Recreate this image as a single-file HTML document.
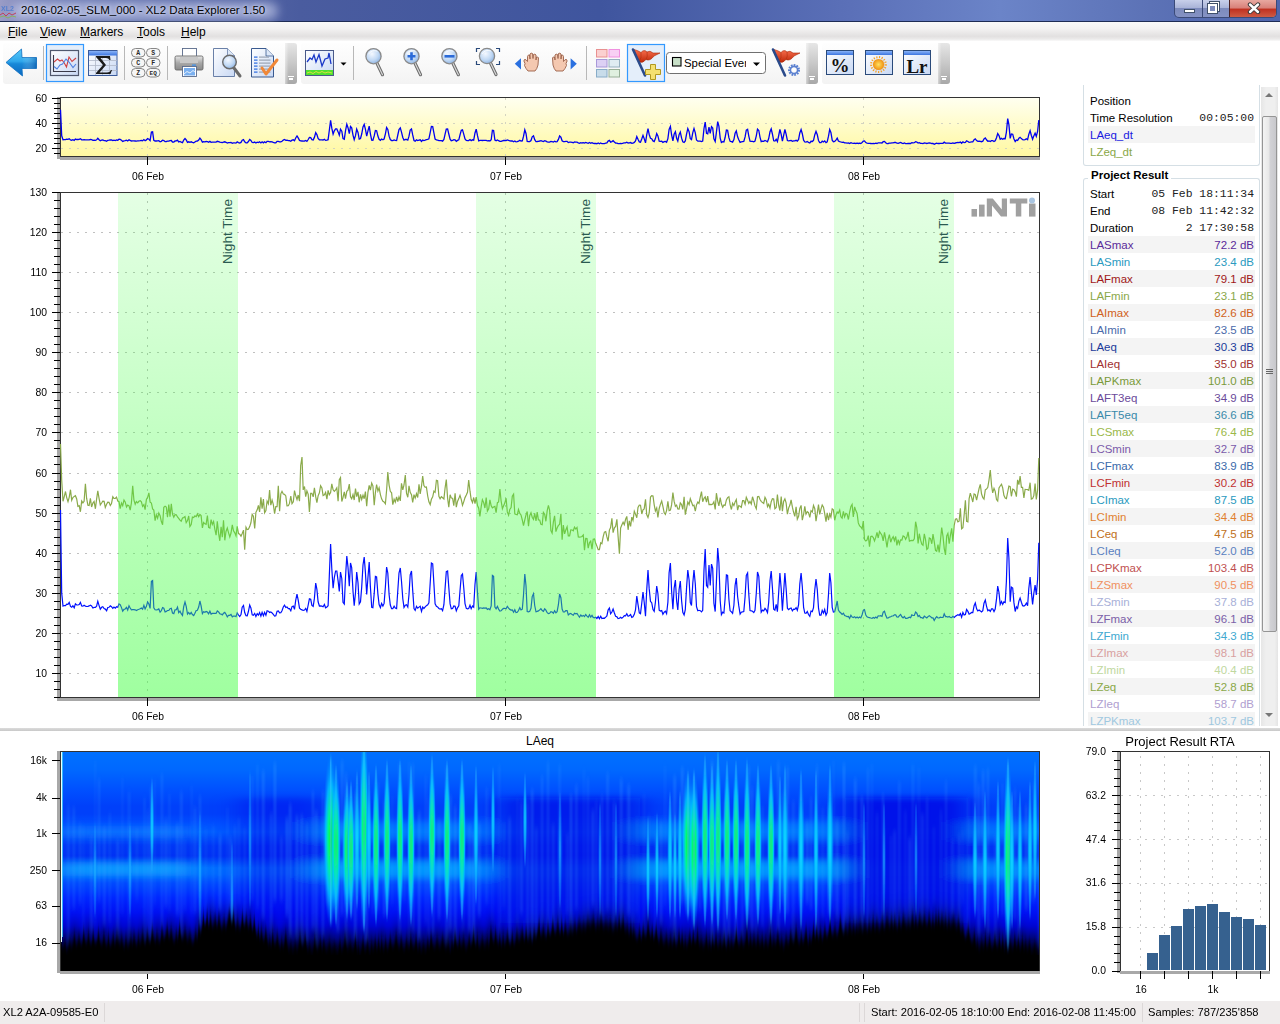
<!DOCTYPE html><html><head><meta charset="utf-8"><style>
*{margin:0;padding:0;box-sizing:border-box}
html,body{width:1280px;height:1024px;overflow:hidden;background:#fff;font-family:"Liberation Sans",sans-serif;font-size:12px;color:#000}
.a{position:absolute}
#title{left:0;top:0;width:1280px;height:22px;background:linear-gradient(90deg,#9a9cc6 0px,#6f7db5 40px,#4a5c9f 300px,#3f559e 600px,#5b70b8 850px,#6b84c8 1000px,#5c72b6 1150px,#4f66ad 1280px);border-bottom:1px solid #1e2c55}
#menu{left:0;top:22px;width:1280px;height:19px;background:linear-gradient(#f9f9f9 0,#f3f2f2 35%,#e2e0e0 75%,#ebeaea 90%,#fafafa 100%)}
#menu span{position:absolute;top:3px;font-size:12px}
#menu u{text-decoration:underline}
#tb{left:0;top:41px;width:1280px;height:45px;background:#fff}
.yl{position:absolute;font-size:11.5px;text-align:right;width:40px;line-height:12px;transform:scaleX(0.9);transform-origin:100% 50%}
.xl{position:absolute;font-size:11.5px;text-align:center;width:60px;line-height:12px;transform:scaleX(0.9);transform-origin:50% 50%}
.rp{position:absolute;left:1088px;width:167px;height:17px;line-height:17px;font-size:11.5px;padding-top:1px;padding-left:2px}
.rp b{font-weight:normal;position:absolute;right:1px;top:1px}
.rp.h{background:#f4f4f4}
.rp.h b{right:1px}
.mono{font-family:"Liberation Mono",monospace;font-size:11.4px;color:#222}
</style></head><body>
<div class="a" id="title"></div>
<div class="a" style="left:12px;top:2px;width:266px;height:18px;border-radius:9px;background:rgba(205,210,238,0.6);filter:blur(5px)"></div>
<div class="a" style="left:21px;top:4px;font-size:11.5px;color:#000;text-shadow:0 0 6px #c8d0f0,0 0 3px #dfe6ff">2016-02-05_SLM_000 - XL2 Data Explorer 1.50</div>
<svg class="a" style="left:0;top:3px" width="17" height="16"><text x="1" y="7.5" font-size="7" font-family="Liberation Sans" font-weight="bold" fill="#4a7ad0" opacity="0.85">XL2</text><polyline points="0,12 3,10 6,13 9,10 12,12 16,10" fill="none" stroke="#c04060" stroke-width="1"/><polyline points="0,14 4,13 8,15 12,13 16,14" fill="none" stroke="#8ab060" stroke-width="1"/></svg>
<div class="a" style="left:1174px;top:0;width:103px;height:18px;border:1px solid #3b4a78;border-top:none;border-radius:0 0 5px 5px;overflow:hidden;background:linear-gradient(#c8d0ea,#aab4d8 45%,#7d8bbc 50%,#8592c4 100%)">
<div class="a" style="left:27px;top:0;width:1px;height:18px;background:#3b4a78"></div>
<div class="a" style="left:54px;top:0;width:48px;height:18px;border-left:1px solid #4a2020;background:linear-gradient(#e8a8a0,#d88078 45%,#c03020 50%,#d06048 100%)"></div>
<div class="a" style="left:9px;top:9px;width:11px;height:4px;background:#fff;border:1px solid #40506a"></div>
<div class="a" style="left:35px;top:2px;width:9px;height:9px;border:2px solid #fff;outline:1px solid #40506a;"></div>
<div class="a" style="left:33px;top:4px;width:9px;height:9px;border:2px solid #fff;outline:1px solid #40506a;background:#7d8bbc"></div>
<svg class="a" style="left:72px;top:2px" width="14" height="12"><path d="M3,2.5 L11,10 M11,2.5 L3,10" stroke="#3a3a3a" stroke-width="4.4" stroke-linecap="round"/><path d="M3,2.5 L11,10 M11,2.5 L3,10" stroke="#fff" stroke-width="2.4" stroke-linecap="round"/></svg>
</div>
<div class="a" id="menu">
<span style="left:8px"><u>F</u>ile</span>
<span style="left:40px"><u>V</u>iew</span>
<span style="left:80px"><u>M</u>arkers</span>
<span style="left:137px"><u>T</u>ools</span>
<span style="left:181px"><u>H</u>elp</span>
</div>
<div class="a" id="tb"></div>
<div class="a" style="left:3px;top:43px;width:294px;height:41px;border-radius:3px;background:linear-gradient(#fefefe,#f8f8f8 60%,#f3f3f3)"></div>
<div class="a" style="left:301px;top:43px;width:517px;height:41px;border-radius:3px;background:linear-gradient(#fefefe,#f8f8f8 60%,#f3f3f3)"></div>
<div class="a" style="left:822px;top:43px;width:128px;height:41px;border-radius:3px;background:linear-gradient(#fefefe,#f8f8f8 60%,#f3f3f3)"></div>
<div class="a" style="left:285px;top:43px;width:12px;height:41px;border-radius:0 3px 3px 0;background:linear-gradient(90deg,rgba(255,255,255,0.5),rgba(255,255,255,0) 30%),linear-gradient(#e6e6e6,#c8c8c8 50%,#a8a8a8)"><div class="a" style="left:3px;top:33px;width:6px;height:1px;background:#fff"></div><div class="a" style="left:4px;top:35px;width:4px;height:2px;background:#fff"></div></div>
<div class="a" style="left:806px;top:43px;width:12px;height:41px;border-radius:0 3px 3px 0;background:linear-gradient(90deg,rgba(255,255,255,0.5),rgba(255,255,255,0) 30%),linear-gradient(#e6e6e6,#c8c8c8 50%,#a8a8a8)"><div class="a" style="left:3px;top:33px;width:6px;height:1px;background:#fff"></div><div class="a" style="left:4px;top:35px;width:4px;height:2px;background:#fff"></div></div>
<div class="a" style="left:938px;top:43px;width:12px;height:41px;border-radius:0 3px 3px 0;background:linear-gradient(90deg,rgba(255,255,255,0.5),rgba(255,255,255,0) 30%),linear-gradient(#e6e6e6,#c8c8c8 50%,#a8a8a8)"><div class="a" style="left:3px;top:33px;width:6px;height:1px;background:#fff"></div><div class="a" style="left:4px;top:35px;width:4px;height:2px;background:#fff"></div></div>
<svg class="a" style="left:0;top:41px" width="960" height="45" viewBox="0 41 960 45">
<defs>
<linearGradient id="arr" x1="0" y1="0" x2="0" y2="1"><stop offset="0" stop-color="#58c8f8"/><stop offset="0.45" stop-color="#30a8ec"/><stop offset="0.55" stop-color="#1888d8"/><stop offset="1" stop-color="#0a68c0"/></linearGradient>
<linearGradient id="arr2" x1="0" y1="0" x2="1" y2="0"><stop offset="0" stop-color="#fff" stop-opacity="0"/><stop offset="1" stop-color="#004a9a" stop-opacity="0.5"/></linearGradient>
<radialGradient id="mg" cx="0.4" cy="0.35" r="0.7"><stop offset="0" stop-color="#f4f8ff"/><stop offset="0.6" stop-color="#c0d8f4"/><stop offset="1" stop-color="#8ab0e0"/></radialGradient>
<linearGradient id="ic" x1="0" y1="0" x2="1" y2="1"><stop offset="0" stop-color="#ffffff"/><stop offset="1" stop-color="#c8d8f4"/></linearGradient>
<linearGradient id="hdr" x1="0" y1="0" x2="0" y2="1"><stop offset="0" stop-color="#8ab4f8"/><stop offset="1" stop-color="#3a74e0"/></linearGradient>
<linearGradient id="pr" x1="0" y1="0" x2="0" y2="1"><stop offset="0" stop-color="#e8e8e8"/><stop offset="0.5" stop-color="#a8a8a8"/><stop offset="1" stop-color="#8a8a8a"/></linearGradient>
<linearGradient id="flag" x1="0" y1="0" x2="0" y2="1"><stop offset="0" stop-color="#f87050"/><stop offset="1" stop-color="#c02808"/></linearGradient>
<radialGradient id="sun"><stop offset="0" stop-color="#ffe060"/><stop offset="1" stop-color="#f09010"/></radialGradient>
</defs>
<path d="M6,62.5 L21.5,49 L22,57.5 L36.5,57.5 L36.5,68.5 L22,68.5 L22.5,76 Z" fill="url(#arr)" stroke="#1070c0" stroke-width="0.8" stroke-linejoin="round"/>
<path d="M22,57.5 L36.5,57.5 L36.5,68.5 L22,68.5 Z" fill="url(#arr2)"/>
<line x1="43.5" y1="46" x2="43.5" y2="80" stroke="#b8b8b8"/>
<line x1="124.5" y1="46" x2="124.5" y2="80" stroke="#b8b8b8"/>
<line x1="167.5" y1="46" x2="167.5" y2="80" stroke="#b8b8b8"/>
<line x1="353.5" y1="46" x2="353.5" y2="80" stroke="#b8b8b8"/>
<line x1="586.5" y1="46" x2="586.5" y2="80" stroke="#b8b8b8"/>
<rect x="46.5" y="44.5" width="37" height="37" fill="#e4eefa" stroke="#3399ff" stroke-width="1.2"/>
<rect x="627.5" y="44.5" width="37" height="37" fill="#e4eefa" stroke="#3399ff" stroke-width="1.2"/>
<rect x="50.5" y="50.5" width="28" height="25" fill="url(#ic)" stroke="#50586e" stroke-width="1.2"/>
<polyline points="53.5,55 53.5,71.5 76,71.5" fill="none" stroke="#3a3a4a" stroke-width="1.1"/>
<polyline points="54,62 57.5,59 60,61 62,60 64,62.5 66.5,67 69,57 72,61.5 76,58" fill="none" stroke="#d04040" stroke-width="1.1"/>
<polyline points="54,66.5 57,69 60,65 62.5,64 66,59 69,62 73,67.5 76,64" fill="none" stroke="#5080e0" stroke-width="1.1"/>
<rect x="88.5" y="50.5" width="28.5" height="25" fill="url(#ic)" stroke="#3a5a9a" stroke-width="1"/>
<rect x="89" y="51" width="28" height="4.5" fill="url(#hdr)"/>
<line x1="89" y1="60.5" x2="117" y2="60.5" stroke="#b0b8c8" stroke-width="0.8"/>
<line x1="89" y1="65.5" x2="117" y2="65.5" stroke="#b0b8c8" stroke-width="0.8"/>
<line x1="89" y1="70.5" x2="117" y2="70.5" stroke="#b0b8c8" stroke-width="0.8"/>
<line x1="95.5" y1="55.5" x2="95.5" y2="75" stroke="#b0b8c8" stroke-width="0.8"/>
<line x1="102.5" y1="55.5" x2="102.5" y2="75" stroke="#b0b8c8" stroke-width="0.8"/>
<line x1="109.5" y1="55.5" x2="109.5" y2="75" stroke="#b0b8c8" stroke-width="0.8"/>
<path d="M96,56 L110,56 L110.5,60 L109.5,60 Q108.5,58 106,58 L100.5,58 L106,65 L99.5,72.5 L107,72.5 Q110,72.5 111,70 L112,70 L110.5,74 L96,74 L96,73 L103,65 L96,57 Z" fill="#1a1a1a"/>
<rect x="131.5" y="48.5" width="13.5" height="8.5" rx="4" fill="#f6f6f6" stroke="#7a7a7a" stroke-width="0.9"/>
<text x="138.2" y="55.3" font-size="6.5" font-family="Liberation Mono" font-weight="bold" text-anchor="middle" fill="#2a2a2a">A</text>
<rect x="146.5" y="48.5" width="13.5" height="8.5" rx="4" fill="#f6f6f6" stroke="#7a7a7a" stroke-width="0.9"/>
<text x="153.2" y="55.3" font-size="6.5" font-family="Liberation Mono" font-weight="bold" text-anchor="middle" fill="#2a2a2a">S</text>
<rect x="131.5" y="58.5" width="13.5" height="8.5" rx="4" fill="#f6f6f6" stroke="#7a7a7a" stroke-width="0.9"/>
<text x="138.2" y="65.3" font-size="6.5" font-family="Liberation Mono" font-weight="bold" text-anchor="middle" fill="#2a2a2a">C</text>
<rect x="146.5" y="58.5" width="13.5" height="8.5" rx="4" fill="#f6f6f6" stroke="#7a7a7a" stroke-width="0.9"/>
<text x="153.2" y="65.3" font-size="6.5" font-family="Liberation Mono" font-weight="bold" text-anchor="middle" fill="#2a2a2a">F</text>
<rect x="131.5" y="68.5" width="13.5" height="8.5" rx="4" fill="#f6f6f6" stroke="#7a7a7a" stroke-width="0.9"/>
<text x="138.2" y="75.3" font-size="6.5" font-family="Liberation Mono" font-weight="bold" text-anchor="middle" fill="#2a2a2a">Z</text>
<rect x="146.5" y="68.5" width="13.5" height="8.5" rx="4" fill="#f6f6f6" stroke="#7a7a7a" stroke-width="0.9"/>
<text x="153.2" y="75.3" font-size="6" font-family="Liberation Mono" font-weight="bold" text-anchor="middle" fill="#2a2a2a">EQ</text>
<rect x="182.5" y="48.5" width="14" height="9" fill="#fff" stroke="#5a6a8a" stroke-width="0.9"/>
<rect x="175" y="56" width="28" height="14" rx="1.5" fill="url(#pr)" stroke="#6a6a6a" stroke-width="0.9"/>
<rect x="180" y="57" width="18" height="6" fill="#c8c8c8"/>
<rect x="192" y="64.5" width="4" height="1.2" fill="#3a90f0"/>
<rect x="182.5" y="66.5" width="14" height="10" fill="#fff" stroke="#5a6a8a" stroke-width="0.9"/>
<rect x="184" y="68" width="11" height="7.5" fill="#7ab0f0"/>
<polyline points="184,74 187,71.5 190,73 193,70.5 195,72" fill="none" stroke="#fff" stroke-width="0.8"/>
<path d="M213.5,48.5 L227.5,48.5 L234.5,55.5 L234.5,76.5 L213.5,76.5 Z" fill="url(#ic)" stroke="#6a80a8" stroke-width="1"/>
<path d="M227.5,48.5 L227.5,55.5 L234.5,55.5" fill="#dde8f8" stroke="#6a80a8" stroke-width="0.8"/>
<line x1="234" y1="68" x2="240" y2="76" stroke="#6a6a6a" stroke-width="3" stroke-linecap="round"/>
<circle cx="229.5" cy="62" r="6.8" fill="url(#mg)" stroke="#6a6a6a" stroke-width="1.4"/>
<path d="M251.5,48.5 L266,48.5 L273.5,56 L273.5,77 L251.5,77 Z" fill="url(#ic)" stroke="#3a5a90" stroke-width="1"/>
<path d="M266,48.5 L266,56 L273.5,56" fill="#dde8f8" stroke="#3a5a90" stroke-width="0.8"/>
<rect x="254" y="56.5" width="3.5" height="1.2" fill="#2a6ae0"/>
<rect x="259" y="56.5" width="10" height="1.2" fill="#9aa4b4"/>
<rect x="254" y="59.5" width="3.5" height="1.2" fill="#2a6ae0"/>
<rect x="259" y="59.5" width="11.5" height="1.2" fill="#9aa4b4"/>
<rect x="254" y="62.5" width="3.5" height="1.2" fill="#2a6ae0"/>
<rect x="259" y="62.5" width="11.5" height="1.2" fill="#9aa4b4"/>
<rect x="254" y="65.5" width="3.5" height="1.2" fill="#2a6ae0"/>
<rect x="259" y="65.5" width="11.5" height="1.2" fill="#9aa4b4"/>
<rect x="254" y="68.5" width="3.5" height="1.2" fill="#2a6ae0"/>
<rect x="259" y="68.5" width="11.5" height="1.2" fill="#9aa4b4"/>
<rect x="254" y="71.5" width="3.5" height="1.2" fill="#2a6ae0"/>
<rect x="259" y="71.5" width="11.5" height="1.2" fill="#9aa4b4"/>
<path d="M262,68 L266,74 L277,60" fill="none" stroke="#f08838" stroke-width="3" stroke-linecap="round" stroke-linejoin="round"/>
<rect x="305.5" y="50.5" width="28" height="25" fill="url(#ic)" stroke="#4a5a8a" stroke-width="1"/>
<rect x="306" y="70" width="27" height="5" fill="#50e030"/>
<polyline points="307,73 310,72 313,73.5 316,71.5 319,73 322,71.5 325,73 328,72 332,73" fill="none" stroke="#e8e040" stroke-width="0.9"/>
<polyline points="307,62 310,58 312,59.5 314,55 316,62 319,54.5 322,66 325,59 328,58 329,53 331,64" fill="none" stroke="#1a38c8" stroke-width="1.3"/>
<path d="M340.5,62.5 L346.5,62.5 L343.5,65.5 Z" fill="#000"/>
<g>
<line x1="377.0" y1="63.2" x2="382.5" y2="74.7" stroke="#6a6a6a" stroke-width="3.2" stroke-linecap="round"/>
<line x1="377.0" y1="63.2" x2="382.5" y2="74.7" stroke="#d8d8d8" stroke-width="1.2" stroke-linecap="round"/>
<circle cx="373.5" cy="56.2" r="7.6" fill="url(#mg)" stroke="#8a8a8a" stroke-width="1.3"/>
<path d="M368.5,54.2 q3,-5 9,-3" stroke="#fff" stroke-width="1" fill="none" opacity="0.8"/>
</g>
<g>
<line x1="415.0" y1="63.2" x2="420.5" y2="74.7" stroke="#6a6a6a" stroke-width="3.2" stroke-linecap="round"/>
<line x1="415.0" y1="63.2" x2="420.5" y2="74.7" stroke="#d8d8d8" stroke-width="1.2" stroke-linecap="round"/>
<circle cx="411.5" cy="56.2" r="7.6" fill="url(#mg)" stroke="#8a8a8a" stroke-width="1.3"/>
<path d="M406.5,54.2 q3,-5 9,-3" stroke="#fff" stroke-width="1" fill="none" opacity="0.8"/>
<path d="M407.5,56.2 h8 M411.5,52.2 v8" stroke="#2a6ad8" stroke-width="2.6"/></g>
<g>
<line x1="452.9" y1="63.2" x2="458.4" y2="74.7" stroke="#6a6a6a" stroke-width="3.2" stroke-linecap="round"/>
<line x1="452.9" y1="63.2" x2="458.4" y2="74.7" stroke="#d8d8d8" stroke-width="1.2" stroke-linecap="round"/>
<circle cx="449.4" cy="56.2" r="7.6" fill="url(#mg)" stroke="#8a8a8a" stroke-width="1.3"/>
<path d="M444.4,54.2 q3,-5 9,-3" stroke="#fff" stroke-width="1" fill="none" opacity="0.8"/>
<rect x="444.5" y="55" width="10" height="2.6" fill="#2a6ad8"/></g>
<g>
<line x1="490.5" y1="63" x2="496" y2="74.5" stroke="#6a6a6a" stroke-width="3.2" stroke-linecap="round"/>
<line x1="490.5" y1="63" x2="496" y2="74.5" stroke="#d8d8d8" stroke-width="1.2" stroke-linecap="round"/>
<circle cx="487" cy="56" r="7.6" fill="url(#mg)" stroke="#8a8a8a" stroke-width="1.3"/>
<path d="M482,54 q3,-5 9,-3" stroke="#fff" stroke-width="1" fill="none" opacity="0.8"/>
<path d="M476.5,52 v-3.5 h3.5 M496,48.5 h3.5 v3.5 M499.5,61 v3.5 h-3.5 M480,64.5 h-3.5 v-3.5" fill="none" stroke="#2a4a7a" stroke-width="1.2"/></g>
<path d="M514.8,63.8 L521,58.3 L521,69.4 Z" fill="#2a70e0"/>
<path d="M576.8,63.8 L570.6,58.3 L570.6,69.4 Z" fill="#2a70e0"/>
<path transform="translate(522,53.5)" d="M3,10 q-2,-3 -0.5,-4 q1.5,-0.5 3,2 l0,-5 q0.5,-2 2,-1.5 l0.5,4 l0,-5 q1,-1.5 2.5,-0.5 l0.5,5 l0.5,-4 q1.5,-1 2.5,0.5 l0,5 l0.5,-3 q1.5,-0.5 2,1 l-0.5,7 q-1,4 -3,6 l-7,0 q-2,-2 -3.5,-5.5 z" fill="#f4c8b0" stroke="#9a6048" stroke-width="0.9"/>
<path transform="translate(569,53.5) scale(-1,1)" d="M3,10 q-2,-3 -0.5,-4 q1.5,-0.5 3,2 l0,-5 q0.5,-2 2,-1.5 l0.5,4 l0,-5 q1,-1.5 2.5,-0.5 l0.5,5 l0.5,-4 q1.5,-1 2.5,0.5 l0,5 l0.5,-3 q1.5,-0.5 2,1 l-0.5,7 q-1,4 -3,6 l-7,0 q-2,-2 -3.5,-5.5 z" fill="#f4c8b0" stroke="#9a6048" stroke-width="0.9"/>
<rect x="596.5" y="49.5" width="10.5" height="7.5" fill="#fbd0d0" stroke="#e89090" stroke-width="1"/>
<rect x="609" y="49.5" width="10.5" height="7.5" fill="#f8d0f4" stroke="#f090e0" stroke-width="1"/>
<rect x="596.5" y="59.5" width="10.5" height="7.5" fill="#dcd0f4" stroke="#a898d8" stroke-width="1"/>
<rect x="609" y="59.5" width="10.5" height="7.5" fill="#e0ecf2" stroke="#98b0c0" stroke-width="1"/>
<rect x="596.5" y="69.5" width="10.5" height="7.5" fill="#c8dcea" stroke="#88acc8" stroke-width="1"/>
<rect x="609" y="69.5" width="10.5" height="7.5" fill="#e0f0e0" stroke="#98b098" stroke-width="1"/>
<path d="M634,49.5 Q638,50.5 641,52.5 Q644,49.0 647,52.0 Q650,50.0 653,53.0 L660,53.0 L654,56.0 Q650,61.5 646,59.5 Q643,63.5 639,62.0 Z" fill="url(#flag)" stroke="#a82808" stroke-width="0.6"/><path d="M641,52.5 Q642,57.5 639,62.0 M647,52.0 Q648,56.5 646,59.5" fill="none" stroke="#a82808" stroke-width="0.7" opacity="0.7"/><line x1="633" y1="49.5" x2="645" y2="75.5" stroke="#2a4a8a" stroke-width="2.6" stroke-linecap="round"/>
<path d="M650.5,64.5 h5 v5 h5 v5 h-5 v5 h-5 v-5 h-5 v-5 h5 z" fill="#f4e070" stroke="#b09820" stroke-width="1"/>
<path d="M774,49.5 Q778,50.5 781,52.5 Q784,49.0 787,52.0 Q790,50.0 793,53.0 L800,53.0 L794,56.0 Q790,61.5 786,59.5 Q783,63.5 779,62.0 Z" fill="url(#flag)" stroke="#a82808" stroke-width="0.6"/><path d="M781,52.5 Q782,57.5 779,62.0 M787,52.0 Q788,56.5 786,59.5" fill="none" stroke="#a82808" stroke-width="0.7" opacity="0.7"/><line x1="773" y1="49.5" x2="785" y2="75.5" stroke="#2a4a8a" stroke-width="2.6" stroke-linecap="round"/>
<g transform="translate(794,70)"><circle r="4.6" fill="none" stroke="#5a80d0" stroke-width="2.8" stroke-dasharray="1.6 1.0"/><circle r="3.6" fill="none" stroke="#5a80d0" stroke-width="1.6"/><circle r="1.8" fill="#fff"/></g>
<rect x="666.5" y="52.5" width="99" height="21" rx="3" fill="#fff" stroke="#707070" stroke-width="1"/>
<rect x="672.5" y="57.5" width="8.5" height="8.5" fill="#c8e0c8" stroke="#000" stroke-width="1.1"/>
<path d="M753,62.5 L760,62.5 L756.5,66 Z" fill="#000"/>
<rect x="826.5" y="50.5" width="27" height="24" fill="url(#ic)" stroke="#2a4a7a" stroke-width="1"/>
<rect x="827" y="51" width="26" height="4" fill="url(#hdr)"/>
<rect x="865.5" y="50.5" width="27" height="24" fill="url(#ic)" stroke="#2a4a7a" stroke-width="1"/>
<rect x="866" y="51" width="26" height="4" fill="url(#hdr)"/>
<rect x="903.5" y="50.5" width="27" height="24" fill="url(#ic)" stroke="#2a4a7a" stroke-width="1"/>
<rect x="904" y="51" width="26" height="4" fill="url(#hdr)"/>
<text x="840" y="72" font-size="19" font-family="Liberation Serif" font-weight="bold" text-anchor="middle" fill="#111">%</text>
<g transform="translate(878.5,64.5)"><circle r="7.4" fill="none" stroke="#f8a020" stroke-width="2" stroke-dasharray="1.2 1.5"/><circle r="5.6" fill="url(#sun)"/><path d="M1.5,-5.4 a5.6,5.6 0 0,1 0,10.8 a4.5,5.4 0 0,0 0,-10.8z" fill="#e88000" opacity="0.6"/></g>
<text x="917" y="72.5" font-size="19" font-family="Liberation Serif" font-weight="bold" text-anchor="middle" fill="#111">Lr</text>
</svg>
<div class="a" style="left:684px;top:56px;font-size:11.4px;line-height:14px;width:62px;overflow:hidden;white-space:nowrap">Special Event</div>
<div class="a" style="left:60px;top:97px;width:980px;height:60px;border:1px solid #333;background:linear-gradient(#fffff0,#fff8a0)"></div>
<div class="a" style="left:57px;top:97px;width:3px;height:62px;background:#a8a8a8"></div>
<div class="a" style="left:60px;top:157px;width:980px;height:3px;background:#a8a8a8"></div>
<div class="a" style="left:60px;top:192px;width:980px;height:506px;border:1px solid #333;background:#fff"></div>
<div class="a" style="left:57px;top:192px;width:3px;height:509px;background:#a8a8a8"></div>
<div class="a" style="left:60px;top:698px;width:980px;height:3px;background:#a8a8a8"></div>
<svg class="a" style="left:0;top:0" width="1280" height="1024">
<defs><linearGradient id="band" x1="0" y1="0" x2="0" y2="1"><stop offset="0" stop-color="#40ff40" stop-opacity="0.14"/><stop offset="1" stop-color="#40ff40" stop-opacity="0.5"/></linearGradient><linearGradient id="yel" x1="0" y1="0" x2="0" y2="1"><stop offset="0" stop-color="#fffff0"/><stop offset="1" stop-color="#fff7a0"/></linearGradient></defs>
<line x1="61" x2="1039" y1="673.5" y2="673.5" stroke="#c0c0c0" stroke-dasharray="2 6"/>
<line x1="61" x2="1039" y1="633.5" y2="633.5" stroke="#c0c0c0" stroke-dasharray="2 6"/>
<line x1="61" x2="1039" y1="593.5" y2="593.5" stroke="#c0c0c0" stroke-dasharray="2 6"/>
<line x1="61" x2="1039" y1="553.5" y2="553.5" stroke="#c0c0c0" stroke-dasharray="2 6"/>
<line x1="61" x2="1039" y1="513.5" y2="513.5" stroke="#c0c0c0" stroke-dasharray="2 6"/>
<line x1="61" x2="1039" y1="473.5" y2="473.5" stroke="#c0c0c0" stroke-dasharray="2 6"/>
<line x1="61" x2="1039" y1="432.5" y2="432.5" stroke="#c0c0c0" stroke-dasharray="2 6"/>
<line x1="61" x2="1039" y1="392.5" y2="392.5" stroke="#c0c0c0" stroke-dasharray="2 6"/>
<line x1="61" x2="1039" y1="352.5" y2="352.5" stroke="#c0c0c0" stroke-dasharray="2 6"/>
<line x1="61" x2="1039" y1="312.5" y2="312.5" stroke="#c0c0c0" stroke-dasharray="2 6"/>
<line x1="61" x2="1039" y1="272.5" y2="272.5" stroke="#c0c0c0" stroke-dasharray="2 6"/>
<line x1="61" x2="1039" y1="232.5" y2="232.5" stroke="#c0c0c0" stroke-dasharray="2 6"/>
<line x1="147.5" x2="147.5" y1="193" y2="697" stroke="#c0c0c0" stroke-dasharray="2 6"/>
<line x1="505.5" x2="505.5" y1="193" y2="697" stroke="#c0c0c0" stroke-dasharray="2 6"/>
<line x1="863.5" x2="863.5" y1="193" y2="697" stroke="#c0c0c0" stroke-dasharray="2 6"/>
<polyline points="60.5,444.0 61.7,480.3 63.0,501.3 64.2,496.8 65.5,491.5 66.7,497.6 68.0,501.6 69.2,497.3 70.5,489.7 71.7,500.3 72.9,497.5 74.2,496.4 75.4,495.7 76.7,499.0 77.9,506.3 79.2,505.7 80.4,511.8 81.7,501.0 82.9,502.9 84.1,501.3 85.4,483.8 86.6,498.2 87.9,505.3 89.1,505.5 90.4,498.3 91.6,507.0 92.9,503.1 94.1,501.4 95.4,508.8 96.6,499.1 97.8,490.9 99.1,498.6 100.3,504.9 101.6,503.0 102.8,501.1 104.1,501.3 105.3,507.5 106.6,504.3 107.8,502.2 109.0,502.3 110.3,505.5 111.5,503.5 112.8,496.8 114.0,498.4 115.3,498.5 116.5,497.1 117.8,501.0 119.0,501.7 120.2,508.6 121.5,503.1 122.7,505.7 124.0,500.1 125.2,501.9 126.5,507.0 127.7,505.1 129.0,505.8 130.2,510.1 131.4,503.0 132.7,485.8 133.9,499.8 135.2,504.3 136.4,501.5 137.7,502.8 138.9,501.3 140.2,500.7 141.4,501.9 142.6,506.3 143.9,504.6 145.1,509.6 146.4,499.4 147.6,497.4 148.9,492.8 150.1,502.2 151.4,503.0 152.6,508.9 153.8,510.0 155.1,520.6 156.3,514.7 157.6,518.2 158.8,513.0 160.1,515.7 161.3,521.3 162.6,524.8 163.8,507.3 165.1,506.3 166.3,507.0 167.5,517.1 168.8,504.6 170.0,516.6 171.3,503.9 172.5,514.1 173.8,517.2 175.0,514.6 176.3,514.8 177.5,517.0 178.7,518.3 180.0,520.2 181.2,521.3 182.5,518.0 183.7,517.6 185.0,516.6 186.2,522.7 187.5,520.6 188.7,516.0 189.9,526.5 191.2,524.5 192.4,517.1 193.7,517.5 194.9,515.9 196.2,516.7 197.4,513.9 198.7,516.6 199.9,514.4 201.1,515.6 202.4,527.9 203.6,522.4 204.9,523.8 206.1,524.3 207.4,515.5 208.6,527.3 209.9,528.1 211.1,519.7 212.3,524.4 213.6,521.5 214.8,529.0 216.1,535.2 217.3,521.3 218.6,533.4 219.8,540.8 221.1,526.8 222.3,537.2 223.5,520.2 224.8,540.3 226.0,531.5 227.3,528.0 228.5,532.6 229.8,537.0 231.0,533.0 232.3,524.9 233.5,530.8 234.8,532.8 236.0,535.8 237.2,526.4 238.5,533.5 239.7,534.2 241.0,536.2 242.2,533.5 243.5,530.1 244.7,549.6 246.0,527.2 247.2,529.5 248.4,529.3 249.7,526.6 250.9,522.8 252.2,514.4 253.4,516.1 254.7,528.5 255.9,512.3 257.2,509.8 258.4,505.4 259.6,511.9 260.9,497.3 262.1,508.7 263.4,499.1 264.6,512.8 265.9,510.5 267.1,501.0 268.4,503.7 269.6,490.1 270.8,505.2 272.1,500.0 273.3,504.3 274.6,513.6 275.8,506.6 277.1,506.7 278.3,485.8 279.6,511.1 280.8,493.8 282.0,491.3 283.3,494.0 284.5,494.3 285.8,496.0 287.0,505.9 288.3,505.8 289.5,503.4 290.8,496.0 292.0,503.6 293.3,501.7 294.5,490.6 295.7,495.7 297.0,499.7 298.2,495.0 299.5,501.2 300.7,465.5 302.0,457.0 303.2,489.9 304.5,486.5 305.7,496.6 306.9,490.9 308.2,494.4 309.4,512.0 310.7,493.4 311.9,493.4 313.2,496.9 314.4,487.8 315.7,496.7 316.9,502.7 318.1,495.8 319.4,492.8 320.6,485.7 321.9,487.9 323.1,495.5 324.4,494.8 325.6,492.4 326.9,499.2 328.1,490.4 329.3,494.8 330.6,492.6 331.8,483.9 333.1,489.8 334.3,491.3 335.6,489.8 336.8,487.8 338.1,501.1 339.3,479.6 340.5,477.5 341.8,501.5 343.0,497.5 344.3,491.8 345.5,498.7 346.8,491.4 348.0,490.2 349.3,484.1 350.5,496.7 351.7,498.8 353.0,494.6 354.2,500.0 355.5,488.5 356.7,496.6 358.0,491.8 359.2,502.3 360.5,494.4 361.7,499.5 363.0,495.2 364.2,498.7 365.4,491.6 366.7,506.3 367.9,492.7 369.2,485.4 370.4,490.2 371.7,483.1 372.9,485.8 374.2,505.3 375.4,492.6 376.6,484.5 377.9,491.1 379.1,487.8 380.4,494.6 381.6,498.8 382.9,501.2 384.1,501.9 385.4,503.8 386.6,490.2 387.8,472.0 389.1,485.1 390.3,491.3 391.6,492.8 392.8,504.7 394.1,499.3 395.3,502.2 396.6,497.0 397.8,501.6 399.0,496.9 400.3,500.9 401.5,483.4 402.8,489.8 404.0,485.0 405.3,475.0 406.5,493.1 407.8,497.2 409.0,485.8 410.2,492.4 411.5,494.7 412.7,502.5 414.0,494.6 415.2,498.1 416.5,493.6 417.7,497.5 419.0,484.4 420.2,493.8 421.5,486.2 422.7,476.1 423.9,485.5 425.2,487.3 426.4,487.0 427.7,496.0 428.9,501.8 430.2,504.6 431.4,499.3 432.7,496.8 433.9,491.2 435.1,492.3 436.4,480.2 437.6,480.6 438.9,496.3 440.1,498.7 441.4,496.7 442.6,497.7 443.9,498.9 445.1,487.8 446.3,479.6 447.6,498.1 448.8,507.2 450.1,494.8 451.3,498.0 452.6,498.2 453.8,505.7 455.1,493.3 456.3,507.2 457.5,501.5 458.8,498.6 460.0,495.4 461.3,499.7 462.5,505.3 463.8,501.6 465.0,497.6 466.3,495.1 467.5,492.3 468.7,480.0 470.0,491.2 471.2,499.6 472.5,502.6 473.7,497.5 475.0,503.7 476.2,497.1 477.5,505.5 478.7,508.2 479.9,516.4 481.2,506.7 482.4,499.7 483.7,502.6 484.9,508.0 486.2,497.5 487.4,511.1 488.7,508.8 489.9,499.9 491.2,505.8 492.4,507.8 493.6,507.0 494.9,506.3 496.1,512.6 497.4,502.7 498.6,502.0 499.9,489.0 501.1,500.8 502.4,508.7 503.6,505.7 504.8,503.1 506.1,498.2 507.3,511.9 508.6,515.1 509.8,509.4 511.1,507.5 512.3,496.2 513.6,494.1 514.8,513.9 516.0,514.5 517.3,514.7 518.5,509.5 519.8,513.4 521.0,514.9 522.3,520.0 523.5,525.7 524.8,519.8 526.0,514.8 527.2,511.5 528.5,526.2 529.7,515.7 531.0,512.7 532.2,517.2 533.5,519.4 534.7,513.4 536.0,520.8 537.2,512.1 538.4,519.9 539.7,520.0 540.9,524.3 542.2,524.7 543.4,512.5 544.7,514.3 545.9,521.3 547.2,510.7 548.4,505.3 549.6,510.0 550.9,530.7 552.1,533.1 553.4,521.8 554.6,515.8 555.9,531.6 557.1,528.0 558.4,525.4 559.6,524.4 560.9,513.8 562.1,539.6 563.3,525.1 564.6,533.8 565.8,530.0 567.1,526.8 568.3,535.9 569.6,535.9 570.8,529.9 572.1,530.0 573.3,530.8 574.5,527.1 575.8,529.0 577.0,527.5 578.3,536.9 579.5,537.1 580.8,537.0 582.0,536.5 583.3,535.0 584.5,550.3 585.7,538.4 587.0,538.6 588.2,548.2 589.5,542.6 590.7,541.2 592.0,549.1 593.2,539.3 594.5,538.9 595.7,543.3 596.9,546.1 598.2,549.6 599.4,549.6 600.7,542.8 601.9,543.7 603.2,536.6 604.4,532.1 605.7,531.6 606.9,536.9 608.1,541.3 609.4,530.1 610.6,527.6 611.9,518.3 613.1,532.6 614.4,527.9 615.6,526.4 616.9,519.3 618.1,536.5 619.4,553.7 620.6,528.1 621.8,525.0 623.1,522.2 624.3,524.7 625.6,519.3 626.8,516.4 628.1,529.8 629.3,520.8 630.6,526.4 631.8,517.2 633.0,520.3 634.3,511.2 635.5,514.1 636.8,517.8 638.0,507.4 639.3,505.1 640.5,505.2 641.8,514.0 643.0,509.8 644.2,508.9 645.5,499.3 646.7,514.5 648.0,517.5 649.2,513.0 650.5,497.1 651.7,495.6 653.0,496.0 654.2,504.8 655.4,511.0 656.7,508.0 657.9,517.3 659.2,508.5 660.4,504.4 661.7,501.0 662.9,506.4 664.2,512.8 665.4,514.4 666.6,510.3 667.9,501.3 669.1,510.7 670.4,510.1 671.6,504.9 672.9,492.5 674.1,501.2 675.4,506.3 676.6,505.1 677.8,509.0 679.1,509.1 680.3,502.9 681.6,504.6 682.8,509.4 684.1,496.9 685.3,514.7 686.6,508.3 687.8,502.0 689.1,504.6 690.3,498.7 691.5,502.0 692.8,505.7 694.0,505.1 695.3,511.2 696.5,505.0 697.8,502.0 699.0,503.4 700.3,496.9 701.5,491.6 702.7,501.7 704.0,498.3 705.2,496.8 706.5,502.2 707.7,496.0 709.0,504.6 710.2,504.3 711.5,504.6 712.7,504.1 713.9,501.8 715.2,509.4 716.4,493.2 717.7,501.1 718.9,505.9 720.2,497.5 721.4,504.1 722.7,507.3 723.9,504.9 725.1,505.4 726.4,499.9 727.6,497.6 728.9,496.7 730.1,504.6 731.4,509.5 732.6,503.3 733.9,505.6 735.1,501.9 736.3,499.5 737.6,510.2 738.8,505.7 740.1,506.3 741.3,507.3 742.6,500.7 743.8,500.7 745.1,504.2 746.3,497.3 747.6,500.2 748.8,503.4 750.0,501.4 751.3,504.0 752.5,496.8 753.8,500.8 755.0,505.9 756.3,508.8 757.5,496.7 758.8,496.4 760.0,499.5 761.2,501.3 762.5,502.6 763.7,503.4 765.0,497.3 766.2,499.6 767.5,506.6 768.7,504.2 770.0,508.1 771.2,501.7 772.4,498.7 773.7,498.9 774.9,508.8 776.2,507.5 777.4,494.5 778.7,505.5 779.9,510.5 781.2,496.5 782.4,511.2 783.6,501.5 784.9,498.8 786.1,502.8 787.4,514.2 788.6,508.1 789.9,505.1 791.1,499.8 792.4,507.2 793.6,512.3 794.8,516.4 796.1,506.8 797.3,519.2 798.6,516.3 799.8,508.5 801.1,505.4 802.3,520.2 803.6,514.5 804.8,506.3 806.0,514.1 807.3,511.7 808.5,512.6 809.8,517.4 811.0,510.7 812.3,512.0 813.5,505.5 814.8,508.7 816.0,521.1 817.3,513.2 818.5,504.5 819.7,514.4 821.0,509.1 822.2,504.9 823.5,507.1 824.7,513.6 826.0,521.6 827.2,512.9 828.5,520.1 829.7,514.1 830.9,517.2 832.2,508.8 833.4,509.8 834.7,520.3 835.9,515.1 837.2,512.0 838.4,512.9 839.7,510.0 840.9,516.8 842.1,518.1 843.4,511.3 844.6,516.8 845.9,513.3 847.1,514.1 848.4,519.5 849.6,512.4 850.9,506.4 852.1,504.4 853.3,516.9 854.6,506.9 855.8,510.6 857.1,513.5 858.3,522.9 859.6,525.9 860.8,526.9 862.1,528.9 863.3,521.1 864.5,539.6 865.8,541.0 867.0,540.1 868.3,535.6 869.5,546.6 870.8,536.5 872.0,536.1 873.3,537.6 874.5,541.0 875.8,537.2 877.0,532.4 878.2,538.0 879.5,531.6 880.7,533.3 882.0,535.5 883.2,540.8 884.5,532.3 885.7,539.0 887.0,547.4 888.2,539.0 889.4,534.7 890.7,542.2 891.9,538.7 893.2,536.6 894.4,540.7 895.7,536.5 896.9,545.4 898.2,539.6 899.4,544.0 900.6,539.8 901.9,540.0 903.1,535.9 904.4,536.6 905.6,539.3 906.9,536.7 908.1,531.9 909.4,541.2 910.6,540.6 911.8,540.4 913.1,540.6 914.3,538.8 915.6,521.7 916.8,527.6 918.1,543.5 919.3,533.7 920.6,540.2 921.8,544.2 923.0,545.3 924.3,533.9 925.5,539.3 926.8,549.4 928.0,548.2 929.3,537.9 930.5,538.6 931.8,543.8 933.0,534.0 934.2,541.4 935.5,550.4 936.7,551.3 938.0,544.7 939.2,552.5 940.5,540.0 941.7,527.6 943.0,536.4 944.2,548.3 945.5,554.9 946.7,535.9 947.9,533.4 949.2,543.6 950.4,535.4 951.7,528.4 952.9,541.8 954.2,525.5 955.4,519.2 956.7,518.7 957.9,521.9 959.1,521.2 960.4,508.4 961.6,528.8 962.9,527.6 964.1,515.5 965.4,500.3 966.6,521.3 967.9,521.8 969.1,498.9 970.3,493.1 971.6,497.3 972.8,502.0 974.1,494.0 975.3,494.7 976.6,500.2 977.8,494.4 979.1,488.3 980.3,484.4 981.5,493.8 982.8,497.6 984.0,499.0 985.3,489.8 986.5,489.1 987.8,487.3 989.0,480.1 990.3,470.0 991.5,485.1 992.7,492.8 994.0,488.3 995.2,491.4 996.5,499.6 997.7,501.0 999.0,488.0 1000.2,486.0 1001.5,484.2 1002.7,487.9 1003.9,495.3 1005.2,498.1 1006.4,498.7 1007.7,492.0 1008.9,486.0 1010.2,486.6 1011.4,496.3 1012.7,489.1 1013.9,489.8 1015.2,492.1 1016.4,496.6 1017.6,479.8 1018.9,484.6 1020.1,476.0 1021.4,487.4 1022.6,487.3 1023.9,498.0 1025.1,489.4 1026.4,489.5 1027.6,489.7 1028.8,490.3 1030.1,482.7 1031.3,499.2 1032.6,498.6 1033.8,495.6 1035.1,483.5 1036.3,499.4 1037.6,490.3 1038.8,458.0" fill="none" stroke="#8aaa4a" stroke-width="1.2"/>
<polyline points="60.5,510.0 61.7,593.1 63.0,606.1 64.2,605.5 65.5,605.6 66.7,604.1 68.0,604.4 69.2,602.4 70.5,606.4 71.7,607.2 72.9,605.8 74.2,607.9 75.4,603.8 76.7,605.0 77.9,605.0 79.2,604.5 80.4,602.4 81.7,605.9 82.9,606.2 84.1,605.3 85.4,606.2 86.6,606.5 87.9,606.3 89.1,605.9 90.4,605.1 91.6,605.9 92.9,608.0 94.1,607.4 95.4,607.5 96.6,606.2 97.8,601.2 99.1,605.6 100.3,609.2 101.6,607.3 102.8,606.7 104.1,608.6 105.3,609.1 106.6,610.8 107.8,607.5 109.0,607.3 110.3,605.9 111.5,606.7 112.8,608.4 114.0,607.1 115.3,608.2 116.5,606.8 117.8,607.3 119.0,604.0 120.2,604.7 121.5,607.6 122.7,611.1 124.0,609.3 125.2,609.0 126.5,607.4 127.7,610.0 129.0,605.8 130.2,608.0 131.4,609.8 132.7,609.6 133.9,609.7 135.2,609.8 136.4,610.5 137.7,609.7 138.9,609.3 140.2,608.8 141.4,608.0 142.6,609.2 143.9,605.3 145.1,609.0 146.4,606.3 147.6,602.0 148.9,604.0 150.1,608.4 151.4,581.3 152.6,580.6 153.8,607.8 155.1,609.8 156.3,610.0 157.6,609.6 158.8,608.9 160.1,612.1 161.3,610.8 162.6,607.5 163.8,608.2 165.1,611.9 166.3,611.4 167.5,610.5 168.8,610.5 170.0,608.7 171.3,608.3 172.5,613.1 173.8,613.6 175.0,609.8 176.3,609.7 177.5,607.2 178.7,612.7 180.0,611.1 181.2,613.7 182.5,615.4 183.7,606.7 185.0,602.0 186.2,606.4 187.5,614.1 188.7,612.5 189.9,614.3 191.2,612.4 192.4,614.5 193.7,615.5 194.9,613.2 196.2,610.5 197.4,610.3 198.7,607.0 199.9,601.0 201.1,605.8 202.4,613.6 203.6,611.7 204.9,612.3 206.1,611.5 207.4,612.1 208.6,613.8 209.9,611.2 211.1,614.1 212.3,613.4 213.6,613.4 214.8,613.4 216.1,613.4 217.3,610.9 218.6,612.0 219.8,613.7 221.1,614.1 222.3,614.9 223.5,613.3 224.8,612.4 226.0,614.2 227.3,616.8 228.5,615.3 229.8,615.3 231.0,614.4 232.3,616.8 233.5,616.1 234.8,616.0 236.0,616.6 237.2,612.9 238.5,615.0 239.7,616.5 241.0,614.5 242.2,607.2 243.5,605.4 244.7,612.5 246.0,615.8 247.2,615.9 248.4,611.5 249.7,605.0 250.9,608.0 252.2,614.8 253.4,615.3 254.7,613.4 255.9,616.4 257.2,613.7 258.4,615.2 259.6,612.5 260.9,616.1 262.1,612.4 263.4,615.7 264.6,612.4 265.9,615.3 267.1,610.8 268.4,611.2 269.6,612.5 270.8,612.0 272.1,612.9 273.3,614.4 274.6,616.1 275.8,615.7 277.1,611.2 278.3,611.0 279.6,612.9 280.8,612.7 282.0,610.7 283.3,607.0 284.5,605.2 285.8,607.5 287.0,606.9 288.3,608.7 289.5,608.7 290.8,610.8 292.0,606.7 293.3,606.1 294.5,609.3 295.7,600.4 297.0,594.0 298.2,600.1 299.5,608.1 300.7,609.2 302.0,609.9 303.2,610.4 304.5,610.0 305.7,608.4 306.9,611.4 308.2,605.0 309.4,598.8 310.7,599.3 311.9,605.4 313.2,606.4 314.4,598.4 315.7,583.0 316.9,589.4 318.1,601.8 319.4,606.0 320.6,605.9 321.9,606.1 323.1,606.7 324.4,604.5 325.6,607.8 326.9,607.1 328.1,605.7 329.3,576.2 330.6,544.0 331.8,568.8 333.1,588.1 334.3,577.6 335.6,571.0 336.8,571.0 338.1,580.8 339.3,591.4 340.5,572.0 341.8,578.5 343.0,602.3 344.3,604.1 345.5,577.3 346.8,556.0 348.0,567.3 349.3,586.3 350.5,563.0 351.7,567.7 353.0,591.1 354.2,605.8 355.5,592.8 356.7,572.0 358.0,582.7 359.2,604.0 360.5,601.8 361.7,587.3 363.0,565.0 364.2,557.0 365.4,572.1 366.7,594.4 367.9,578.2 369.2,562.0 370.4,586.7 371.7,607.3 372.9,607.7 374.2,593.5 375.4,576.4 376.6,577.0 377.9,594.1 379.1,604.6 380.4,607.7 381.6,603.4 382.9,606.0 384.1,603.4 385.4,586.8 386.6,567.0 387.8,573.0 389.1,594.5 390.3,605.0 391.6,608.6 392.8,608.7 394.1,606.2 395.3,608.1 396.6,608.7 397.8,590.5 399.0,573.0 400.3,568.0 401.5,581.2 402.8,598.8 404.0,607.4 405.3,605.2 406.5,604.7 407.8,607.1 409.0,594.5 410.2,574.9 411.5,571.0 412.7,590.4 414.0,608.5 415.2,610.4 416.5,606.3 417.7,608.2 419.0,607.1 420.2,606.2 421.5,611.3 422.7,607.0 423.9,608.5 425.2,606.9 426.4,605.7 427.7,604.8 428.9,602.9 430.2,582.9 431.4,563.0 432.7,563.8 433.9,583.9 435.1,603.9 436.4,606.4 437.6,606.9 438.9,608.5 440.1,609.0 441.4,608.6 442.6,610.6 443.9,604.7 445.1,588.2 446.3,571.7 447.6,571.0 448.8,587.4 450.1,603.9 451.3,608.8 452.6,608.4 453.8,605.9 455.1,606.3 456.3,610.9 457.5,607.8 458.8,605.9 460.0,590.7 461.3,575.5 462.5,574.0 463.8,588.3 465.0,603.6 466.3,608.3 467.5,608.8 468.7,608.5 470.0,605.2 471.2,608.7 472.5,606.1 473.7,607.2 475.0,584.3 476.2,572.0 477.5,592.8 478.7,609.2 479.9,607.8 481.2,608.0 482.4,608.4 483.7,607.9 484.9,608.1 486.2,607.9 487.4,609.4 488.7,608.8 489.9,609.8 491.2,605.9 492.4,575.3 493.6,576.2 494.9,607.0 496.1,608.8 497.4,606.4 498.6,609.1 499.9,611.0 501.1,610.8 502.4,609.3 503.6,608.4 504.8,608.3 506.1,608.7 507.3,606.3 508.6,608.1 509.8,609.4 511.1,610.1 512.3,610.0 513.6,612.2 514.8,609.8 516.0,612.6 517.3,612.3 518.5,610.5 519.8,607.7 521.0,610.0 522.3,609.2 523.5,595.3 524.8,574.0 526.0,585.8 527.2,611.6 528.5,611.9 529.7,611.4 531.0,608.3 532.2,596.6 533.5,593.7 534.7,605.5 536.0,611.8 537.2,611.4 538.4,610.9 539.7,609.9 540.9,608.6 542.2,610.6 543.4,611.4 544.7,608.9 545.9,610.2 547.2,612.7 548.4,613.6 549.6,613.3 550.9,611.6 552.1,612.0 553.4,613.2 554.6,610.7 555.9,612.8 557.1,611.7 558.4,604.7 559.6,594.0 560.9,597.7 562.1,609.1 563.3,611.9 564.6,612.0 565.8,610.7 567.1,610.7 568.3,614.9 569.6,613.7 570.8,613.4 572.1,614.6 573.3,615.3 574.5,613.2 575.8,613.8 577.0,613.4 578.3,615.5 579.5,617.1 580.8,615.0 582.0,616.2 583.3,615.4 584.5,616.6 585.7,614.5 587.0,616.1 588.2,617.3 589.5,614.8 590.7,617.1 592.0,615.4 593.2,617.4 594.5,617.9 595.7,617.3 596.9,618.5 598.2,616.4 599.4,618.7 600.7,616.2 601.9,618.6 603.2,618.2 604.4,618.3 605.7,617.1 606.9,615.9 608.1,610.1 609.4,608.0 610.6,613.8 611.9,612.0 613.1,609.0 614.4,613.0 615.6,616.2 616.9,616.8 618.1,618.6 619.4,618.2 620.6,617.2 621.8,618.3 623.1,617.1 624.3,615.6 625.6,615.9 626.8,613.8 628.1,616.2 629.3,615.8 630.6,614.6 631.8,617.4 633.0,616.8 634.3,614.3 635.5,610.0 636.8,596.0 638.0,604.3 639.3,612.8 640.5,613.7 641.8,602.7 643.0,592.0 644.2,602.2 645.5,616.2 646.7,590.4 648.0,570.0 649.2,588.9 650.5,601.4 651.7,602.7 653.0,609.6 654.2,611.4 655.4,602.3 656.7,586.0 657.9,593.5 659.2,610.2 660.4,611.1 661.7,610.6 662.9,614.3 664.2,612.2 665.4,611.2 666.6,613.7 667.9,602.1 669.1,572.8 670.4,563.0 671.6,590.8 672.9,609.2 674.1,588.4 675.4,580.0 676.6,600.8 677.8,610.0 679.1,589.5 680.3,581.0 681.6,600.8 682.8,612.4 684.1,614.9 685.3,609.6 686.6,587.0 687.8,570.0 689.1,580.0 690.3,602.6 691.5,605.5 692.8,583.0 694.0,570.0 695.3,584.0 696.5,606.6 697.8,610.7 699.0,610.3 700.3,610.7 701.5,611.9 702.7,610.4 704.0,569.9 705.2,549.0 706.5,585.6 707.7,587.3 709.0,565.0 710.2,585.5 711.5,564.1 712.7,568.4 713.9,603.3 715.2,611.6 716.4,582.3 717.7,548.0 718.9,562.5 720.2,600.7 721.4,614.7 722.7,612.2 723.9,613.0 725.1,598.8 726.4,575.0 727.6,575.5 728.9,599.3 730.1,610.8 731.4,611.9 732.6,613.3 733.9,605.3 735.1,585.2 736.3,578.0 737.6,596.5 738.8,605.9 740.1,614.2 741.3,612.3 742.6,611.8 743.8,611.5 745.1,596.6 746.3,575.3 747.6,572.9 748.8,594.2 750.0,610.6 751.3,610.8 752.5,611.3 753.8,612.6 755.0,610.3 756.3,593.1 757.5,572.0 758.8,576.3 760.0,597.6 761.2,612.1 762.5,610.1 763.7,610.9 765.0,608.4 766.2,609.9 767.5,612.6 768.7,602.3 770.0,580.5 771.2,571.0 772.4,587.5 773.7,609.2 774.9,610.2 776.2,604.4 777.4,611.7 778.7,592.3 779.9,573.0 781.2,588.7 782.4,610.6 783.6,592.8 784.9,573.0 786.1,588.2 787.4,608.2 788.6,609.6 789.9,608.5 791.1,608.0 792.4,610.9 793.6,609.2 794.8,609.4 796.1,607.6 797.3,610.3 798.6,604.7 799.8,584.1 801.1,573.0 802.3,586.5 803.6,607.3 804.8,613.1 806.0,613.4 807.3,611.5 808.5,614.5 809.8,616.3 811.0,611.0 812.3,611.6 813.5,607.6 814.8,589.7 816.0,579.0 817.3,589.9 818.5,608.2 819.7,615.1 821.0,615.1 822.2,610.3 823.5,613.2 824.7,609.5 826.0,615.1 827.2,612.5 828.5,594.5 829.7,573.0 830.9,582.7 832.2,607.3 833.4,612.1 834.7,611.7 835.9,607.0 837.2,601.0 838.4,610.1 839.7,612.0 840.9,613.0 842.1,614.4 843.4,613.3 844.6,615.6 845.9,616.0 847.1,616.6 848.4,616.4 849.6,618.4 850.9,615.2 852.1,617.1 853.3,617.5 854.6,616.7 855.8,618.0 857.1,617.0 858.3,618.0 859.6,617.0 860.8,617.9 862.1,614.7 863.3,610.3 864.5,609.6 865.8,615.1 867.0,616.8 868.3,617.4 869.5,617.6 870.8,618.0 872.0,618.3 873.3,617.5 874.5,618.3 875.8,617.1 877.0,618.0 878.2,615.8 879.5,616.0 880.7,615.6 882.0,616.3 883.2,612.2 884.5,611.2 885.7,615.3 887.0,618.1 888.2,618.0 889.4,617.1 890.7,616.7 891.9,616.0 893.2,616.0 894.4,614.8 895.7,614.9 896.9,617.0 898.2,617.2 899.4,615.6 900.6,614.4 901.9,616.8 903.1,617.9 904.4,616.4 905.6,618.3 906.9,618.4 908.1,617.9 909.4,617.2 910.6,617.8 911.8,614.9 913.1,615.5 914.3,615.4 915.6,612.1 916.8,613.2 918.1,616.5 919.3,615.5 920.6,617.6 921.8,617.6 923.0,618.4 924.3,616.2 925.5,617.1 926.8,618.0 928.0,616.6 929.3,615.7 930.5,616.6 931.8,617.8 933.0,617.9 934.2,620.5 935.5,618.1 936.7,616.6 938.0,618.0 939.2,617.9 940.5,617.2 941.7,617.5 943.0,617.4 944.2,613.8 945.5,616.6 946.7,616.6 947.9,617.0 949.2,616.5 950.4,617.5 951.7,617.7 952.9,616.3 954.2,617.4 955.4,616.3 956.7,615.4 957.9,614.6 959.1,615.4 960.4,613.6 961.6,617.2 962.9,612.5 964.1,615.0 965.4,614.5 966.6,609.5 967.9,611.4 969.1,614.1 970.3,613.4 971.6,612.4 972.8,612.5 974.1,605.7 975.3,603.0 976.6,608.8 977.8,611.0 979.1,610.1 980.3,610.9 981.5,612.0 982.8,610.6 984.0,603.2 985.3,600.0 986.5,606.1 987.8,610.8 989.0,609.8 990.3,611.4 991.5,608.9 992.7,608.8 994.0,611.6 995.2,609.0 996.5,599.2 997.7,586.0 999.0,592.6 1000.2,604.5 1001.5,601.5 1002.7,604.4 1003.9,601.9 1005.2,602.6 1006.4,581.3 1007.7,538.0 1008.9,557.7 1010.2,601.7 1011.4,587.1 1012.7,588.0 1013.9,602.4 1015.2,611.5 1016.4,606.8 1017.6,608.4 1018.9,601.1 1020.1,598.0 1021.4,602.2 1022.6,605.7 1023.9,606.0 1025.1,605.3 1026.4,603.0 1027.6,605.7 1028.8,588.7 1030.1,577.0 1031.3,591.4 1032.6,604.4 1033.8,593.6 1035.1,585.0 1036.3,595.0 1037.6,579.3 1038.8,542.8" fill="none" stroke="#0010ff" stroke-width="1.2"/>
<rect x="118" y="193" width="120" height="504" fill="url(#band)"/>
<rect x="476" y="193" width="120" height="504" fill="url(#band)"/>
<rect x="834" y="193" width="120" height="504" fill="url(#band)"/>
<line x1="61" x2="1039" y1="123.5" y2="123.5" stroke="#d4d4c0" stroke-dasharray="2 6"/>
<line x1="61" x2="1039" y1="148.5" y2="148.5" stroke="#d4d4c0" stroke-dasharray="2 6"/>
<line x1="147.5" x2="147.5" y1="98" y2="156" stroke="#d4d4c0" stroke-dasharray="2 6"/>
<line x1="505.5" x2="505.5" y1="98" y2="156" stroke="#d4d4c0" stroke-dasharray="2 6"/>
<line x1="863.5" x2="863.5" y1="98" y2="156" stroke="#d4d4c0" stroke-dasharray="2 6"/>
<polyline points="60.5,109.8 61.7,135.8 63.0,139.8 64.2,139.6 65.5,139.7 66.7,139.2 68.0,139.3 69.2,138.7 70.5,139.9 71.7,140.2 72.9,139.7 74.2,140.4 75.4,139.1 76.7,139.5 77.9,139.5 79.2,139.3 80.4,138.7 81.7,139.8 82.9,139.8 84.1,139.6 85.4,139.9 86.6,139.9 87.9,139.9 89.1,139.8 90.4,139.5 91.6,139.7 92.9,140.4 94.1,140.2 95.4,140.3 96.6,139.8 97.8,138.3 99.1,139.7 100.3,140.8 101.6,140.2 102.8,140.0 104.1,140.6 105.3,140.7 106.6,141.3 107.8,140.3 109.0,140.2 110.3,139.8 111.5,140.0 112.8,140.5 114.0,140.1 115.3,140.5 116.5,140.0 117.8,140.2 119.0,139.2 120.2,139.4 121.5,140.3 122.7,141.4 124.0,140.8 125.2,140.7 126.5,140.2 127.7,141.0 129.0,139.7 130.2,140.4 131.4,141.0 132.7,140.9 133.9,140.9 135.2,141.0 136.4,141.2 137.7,140.9 138.9,140.8 140.2,140.7 141.4,140.4 142.6,140.8 143.9,139.6 145.1,140.7 146.4,139.9 147.6,138.5 148.9,139.2 150.1,140.5 151.4,132.1 152.6,131.8 153.8,140.3 155.1,141.0 156.3,141.0 157.6,140.9 158.8,140.7 160.1,141.7 161.3,141.3 162.6,140.2 163.8,140.5 165.1,141.6 166.3,141.5 167.5,141.2 168.8,141.2 170.0,140.6 171.3,140.5 172.5,142.0 173.8,142.1 175.0,141.0 176.3,140.9 177.5,140.2 178.7,141.9 180.0,141.4 181.2,142.2 182.5,142.7 183.7,140.0 185.0,138.5 186.2,139.9 187.5,142.3 188.7,141.8 189.9,142.4 191.2,141.8 192.4,142.4 193.7,142.8 194.9,142.0 196.2,141.2 197.4,141.1 198.7,140.1 199.9,138.2 201.1,139.7 202.4,142.2 203.6,141.6 204.9,141.8 206.1,141.5 207.4,141.7 208.6,142.2 209.9,141.4 211.1,142.3 212.3,142.1 213.6,142.1 214.8,142.1 216.1,142.1 217.3,141.3 218.6,141.6 219.8,142.2 221.1,142.3 222.3,142.6 223.5,142.1 224.8,141.8 226.0,142.3 227.3,143.1 228.5,142.7 229.8,142.7 231.0,142.4 232.3,143.2 233.5,142.9 234.8,142.9 236.0,143.1 237.2,141.9 238.5,142.6 239.7,143.1 241.0,142.4 242.2,140.2 243.5,139.6 244.7,141.8 246.0,142.8 247.2,142.9 248.4,141.5 249.7,139.5 250.9,140.4 252.2,142.5 253.4,142.7 254.7,142.1 255.9,143.0 257.2,142.2 258.4,142.6 259.6,141.8 260.9,142.9 262.1,141.8 263.4,142.8 264.6,141.8 265.9,142.7 267.1,141.3 268.4,141.4 269.6,141.8 270.8,141.6 272.1,141.9 273.3,142.4 274.6,142.9 275.8,142.8 277.1,141.4 278.3,141.3 279.6,141.9 280.8,141.9 282.0,141.2 283.3,140.1 284.5,139.5 285.8,140.3 287.0,140.1 288.3,140.6 289.5,140.6 290.8,141.3 292.0,140.0 293.3,139.8 294.5,140.8 295.7,138.0 297.0,136.0 298.2,137.9 299.5,140.4 300.7,140.8 302.0,141.0 303.2,141.2 304.5,141.0 305.7,140.5 306.9,141.4 308.2,139.5 309.4,137.5 310.7,137.7 311.9,139.6 313.2,139.9 314.4,137.4 315.7,132.6 316.9,134.6 318.1,138.5 319.4,139.8 320.6,139.8 321.9,139.8 323.1,140.0 324.4,139.3 325.6,140.4 326.9,140.1 328.1,139.7 329.3,130.5 330.6,120.4 331.8,128.2 333.1,134.2 334.3,130.9 335.6,128.9 336.8,128.9 338.1,131.9 339.3,135.2 340.5,129.2 341.8,131.2 343.0,138.6 344.3,139.2 345.5,130.8 346.8,124.2 348.0,127.7 349.3,133.6 350.5,126.4 351.7,127.8 353.0,135.1 354.2,139.7 355.5,135.7 356.7,129.2 358.0,132.5 359.2,139.1 360.5,138.5 361.7,134.0 363.0,127.0 364.2,124.5 365.4,129.2 366.7,136.2 367.9,131.1 369.2,126.1 370.4,133.8 371.7,140.2 372.9,140.3 374.2,135.9 375.4,130.5 376.6,130.7 377.9,136.1 379.1,139.3 380.4,140.3 381.6,139.0 382.9,139.8 384.1,139.0 385.4,133.8 386.6,127.6 387.8,129.5 389.1,136.2 390.3,139.5 391.6,140.6 392.8,140.6 394.1,139.9 395.3,140.4 396.6,140.6 397.8,135.0 399.0,129.5 400.3,127.9 401.5,132.1 402.8,137.5 404.0,140.2 405.3,139.5 406.5,139.4 407.8,140.1 409.0,136.2 410.2,130.1 411.5,128.9 412.7,134.9 414.0,140.5 415.2,141.2 416.5,139.9 417.7,140.5 419.0,140.1 420.2,139.8 421.5,141.4 422.7,140.1 423.9,140.5 425.2,140.1 426.4,139.7 427.7,139.4 428.9,138.8 430.2,132.6 431.4,126.4 432.7,126.6 433.9,132.9 435.1,139.1 436.4,139.9 437.6,140.1 438.9,140.6 440.1,140.7 441.4,140.6 442.6,141.2 443.9,139.4 445.1,134.2 446.3,129.1 447.6,128.9 448.8,134.0 450.1,139.1 451.3,140.7 452.6,140.5 453.8,139.7 455.1,139.9 456.3,141.3 457.5,140.4 458.8,139.8 460.0,135.0 461.3,130.3 462.5,129.8 463.8,134.3 465.0,139.0 466.3,140.5 467.5,140.7 468.7,140.6 470.0,139.5 471.2,140.6 472.5,139.8 473.7,140.2 475.0,133.0 476.2,129.2 477.5,135.7 478.7,140.8 479.9,140.3 481.2,140.4 482.4,140.5 483.7,140.4 484.9,140.4 486.2,140.4 487.4,140.8 488.7,140.7 489.9,141.0 491.2,139.8 492.4,130.2 493.6,130.5 494.9,140.1 496.1,140.7 497.4,139.9 498.6,140.7 499.9,141.3 501.1,141.3 502.4,140.8 503.6,140.5 504.8,140.5 506.1,140.6 507.3,139.9 508.6,140.4 509.8,140.8 511.1,141.0 512.3,141.0 513.6,141.7 514.8,141.0 516.0,141.8 517.3,141.7 518.5,141.2 519.8,140.3 521.0,141.0 522.3,140.8 523.5,136.4 524.8,129.8 526.0,133.5 527.2,141.5 528.5,141.6 529.7,141.5 531.0,140.5 532.2,136.8 533.5,135.9 534.7,139.6 536.0,141.6 537.2,141.5 538.4,141.3 539.7,141.0 540.9,140.6 542.2,141.2 543.4,141.5 544.7,140.7 545.9,141.1 547.2,141.9 548.4,142.1 549.6,142.1 550.9,141.5 552.1,141.6 553.4,142.0 554.6,141.2 555.9,141.9 557.1,141.6 558.4,139.4 559.6,136.0 560.9,137.2 562.1,140.8 563.3,141.6 564.6,141.6 565.8,141.3 567.1,141.3 568.3,142.6 569.6,142.2 570.8,142.1 572.1,142.4 573.3,142.7 574.5,142.0 575.8,142.2 577.0,142.1 578.3,142.8 579.5,143.3 580.8,142.6 582.0,143.0 583.3,142.7 584.5,143.1 585.7,142.4 587.0,142.9 588.2,143.3 589.5,142.5 590.7,143.2 592.0,142.7 593.2,143.4 594.5,143.5 595.7,143.3 596.9,143.7 598.2,143.0 599.4,143.7 600.7,143.0 601.9,143.7 603.2,143.6 604.4,143.6 605.7,143.2 606.9,142.9 608.1,141.1 609.4,140.4 610.6,142.2 611.9,141.6 613.1,140.7 614.4,142.0 615.6,143.0 616.9,143.1 618.1,143.7 619.4,143.6 620.6,143.3 621.8,143.6 623.1,143.2 624.3,142.8 625.6,142.9 626.8,142.2 628.1,143.0 629.3,142.8 630.6,142.5 631.8,143.3 633.0,143.2 634.3,142.4 635.5,141.0 636.8,136.7 638.0,139.3 639.3,141.9 640.5,142.2 641.8,138.8 643.0,135.4 644.2,138.6 645.5,142.9 646.7,134.9 648.0,128.6 649.2,134.5 650.5,138.3 651.7,138.7 653.0,140.9 654.2,141.5 655.4,138.6 656.7,133.5 657.9,135.9 659.2,141.1 660.4,141.4 661.7,141.2 662.9,142.4 664.2,141.7 665.4,141.4 666.6,142.2 667.9,138.6 669.1,129.4 670.4,126.4 671.6,135.0 672.9,140.8 674.1,134.3 675.4,131.7 676.6,138.2 677.8,141.0 679.1,134.6 680.3,132.0 681.6,138.2 682.8,141.8 684.1,142.5 685.3,140.9 686.6,133.9 687.8,128.6 689.1,131.7 690.3,138.7 691.5,139.6 692.8,132.6 694.0,128.6 695.3,132.9 696.5,140.0 697.8,141.2 699.0,141.1 700.3,141.2 701.5,141.6 702.7,141.1 704.0,128.5 705.2,122.0 706.5,133.4 707.7,133.9 709.0,127.0 710.2,133.4 711.5,126.7 712.7,128.1 713.9,138.9 715.2,141.5 716.4,132.4 717.7,121.7 718.9,126.2 720.2,138.1 721.4,142.5 722.7,141.7 723.9,142.0 725.1,137.5 726.4,130.1 727.6,130.3 728.9,137.7 730.1,141.3 731.4,141.6 732.6,142.1 733.9,139.6 735.1,133.3 736.3,131.0 737.6,136.8 738.8,139.8 740.1,142.3 741.3,141.8 742.6,141.6 743.8,141.5 745.1,136.9 746.3,130.2 747.6,129.4 748.8,136.1 750.0,141.2 751.3,141.3 752.5,141.4 753.8,141.8 755.0,141.1 756.3,135.8 757.5,129.2 758.8,130.5 760.0,137.1 761.2,141.7 762.5,141.1 763.7,141.3 765.0,140.5 766.2,141.0 767.5,141.8 768.7,138.6 770.0,131.8 771.2,128.9 772.4,134.0 773.7,140.8 774.9,141.1 776.2,139.3 777.4,141.6 778.7,135.5 779.9,129.5 781.2,134.4 782.4,141.2 783.6,135.7 784.9,129.5 786.1,134.2 787.4,140.5 788.6,140.9 789.9,140.6 791.1,140.4 792.4,141.3 793.6,140.8 794.8,140.8 796.1,140.3 797.3,141.1 798.6,139.4 799.8,133.0 801.1,129.5 802.3,133.7 803.6,140.2 804.8,142.0 806.0,142.1 807.3,141.5 808.5,142.4 809.8,143.0 811.0,141.3 812.3,141.5 813.5,140.3 814.8,134.7 816.0,131.4 817.3,134.8 818.5,140.5 819.7,142.6 821.0,142.6 822.2,141.1 823.5,142.0 824.7,140.9 826.0,142.6 827.2,141.8 828.5,136.2 829.7,129.5 830.9,132.5 832.2,140.2 833.4,141.7 834.7,141.5 835.9,140.1 837.2,138.2 838.4,141.1 839.7,141.6 840.9,142.0 842.1,142.4 843.4,142.1 844.6,142.8 845.9,142.9 847.1,143.1 848.4,143.0 849.6,143.6 850.9,142.7 852.1,143.2 853.3,143.4 854.6,143.1 855.8,143.5 857.1,143.2 858.3,143.5 859.6,143.2 860.8,143.5 862.1,142.5 863.3,141.1 864.5,140.9 865.8,142.6 867.0,143.2 868.3,143.3 869.5,143.4 870.8,143.5 872.0,143.6 873.3,143.4 874.5,143.6 875.8,143.2 877.0,143.5 878.2,142.8 879.5,142.9 880.7,142.8 882.0,143.0 883.2,141.7 884.5,141.4 885.7,142.7 887.0,143.6 888.2,143.5 889.4,143.2 890.7,143.1 891.9,142.9 893.2,142.9 894.4,142.5 895.7,142.5 896.9,143.2 898.2,143.3 899.4,142.8 900.6,142.4 901.9,143.1 903.1,143.5 904.4,143.0 905.6,143.6 906.9,143.7 908.1,143.5 909.4,143.3 910.6,143.5 911.8,142.6 913.1,142.8 914.3,142.7 915.6,141.7 916.8,142.0 918.1,143.1 919.3,142.7 920.6,143.4 921.8,143.4 923.0,143.6 924.3,143.0 925.5,143.2 926.8,143.5 928.0,143.1 929.3,142.8 930.5,143.1 931.8,143.5 933.0,143.5 934.2,144.3 935.5,143.6 936.7,143.1 938.0,143.5 939.2,143.5 940.5,143.3 941.7,143.4 943.0,143.3 944.2,142.2 945.5,143.1 946.7,143.1 947.9,143.2 949.2,143.1 950.4,143.4 951.7,143.4 952.9,143.0 954.2,143.3 955.4,143.0 956.7,142.7 957.9,142.5 959.1,142.7 960.4,142.1 961.6,143.3 962.9,141.8 964.1,142.6 965.4,142.4 966.6,140.9 967.9,141.5 969.1,142.3 970.3,142.1 971.6,141.8 972.8,141.8 974.1,139.7 975.3,138.8 976.6,140.6 977.8,141.4 979.1,141.1 980.3,141.3 981.5,141.7 982.8,141.2 984.0,138.9 985.3,137.9 986.5,139.8 987.8,141.3 989.0,141.0 990.3,141.5 991.5,140.7 992.7,140.6 994.0,141.5 995.2,140.7 996.5,137.7 997.7,133.5 999.0,135.6 1000.2,139.3 1001.5,138.4 1002.7,139.3 1003.9,138.5 1005.2,138.7 1006.4,132.1 1007.7,118.6 1008.9,124.7 1010.2,138.4 1011.4,133.9 1012.7,134.2 1013.9,138.7 1015.2,141.5 1016.4,140.0 1017.6,140.5 1018.9,138.3 1020.1,137.3 1021.4,138.6 1022.6,139.7 1023.9,139.8 1025.1,139.6 1026.4,138.8 1027.6,139.7 1028.8,134.4 1030.1,130.7 1031.3,135.2 1032.6,139.3 1033.8,135.9 1035.1,133.2 1036.3,136.3 1037.6,131.5 1038.8,120.1" fill="none" stroke="#0000f0" stroke-width="1.3"/>
</svg>
<div class="a" style="left:1083px;top:85px;width:177px;height:81px;border:1px solid #d5dfe5;border-top:none;border-radius:0 0 3px 3px"></div>
<div class="yl" style="left:7px;top:91.8px">60</div>
<div class="yl" style="left:7px;top:116.8px">40</div>
<div class="yl" style="left:7px;top:141.8px">20</div>
<div class="yl" style="left:7px;top:666.9px">10</div>
<div class="yl" style="left:7px;top:626.8px">20</div>
<div class="yl" style="left:7px;top:586.7px">30</div>
<div class="yl" style="left:7px;top:546.7px">40</div>
<div class="yl" style="left:7px;top:506.6px">50</div>
<div class="yl" style="left:7px;top:466.5px">60</div>
<div class="yl" style="left:7px;top:426.4px">70</div>
<div class="yl" style="left:7px;top:386.3px">80</div>
<div class="yl" style="left:7px;top:346.3px">90</div>
<div class="yl" style="left:7px;top:306.2px">100</div>
<div class="yl" style="left:7px;top:266.1px">110</div>
<div class="yl" style="left:7px;top:226.0px">120</div>
<div class="yl" style="left:7px;top:185.9px">130</div>
<div class="xl" style="left:117.5px;top:169.5px">06 Feb</div>
<div class="xl" style="left:117.5px;top:709.5px">06 Feb</div>
<div class="xl" style="left:117.5px;top:982.5px">06 Feb</div>
<div class="xl" style="left:475.5px;top:169.5px">07 Feb</div>
<div class="xl" style="left:475.5px;top:709.5px">07 Feb</div>
<div class="xl" style="left:475.5px;top:982.5px">07 Feb</div>
<div class="xl" style="left:833.5px;top:169.5px">08 Feb</div>
<div class="xl" style="left:833.5px;top:709.5px">08 Feb</div>
<div class="xl" style="left:833.5px;top:982.5px">08 Feb</div>
<svg class="a" style="left:0;top:0" width="1280" height="1024">
<line x1="54" x2="60" y1="153.5" y2="153.5" stroke="#000"/>
<line x1="52" x2="60" y1="148.5" y2="148.5" stroke="#000"/>
<line x1="54" x2="60" y1="143.5" y2="143.5" stroke="#000"/>
<line x1="54" x2="60" y1="138.5" y2="138.5" stroke="#000"/>
<line x1="54" x2="60" y1="133.5" y2="133.5" stroke="#000"/>
<line x1="54" x2="60" y1="128.5" y2="128.5" stroke="#000"/>
<line x1="52" x2="60" y1="123.5" y2="123.5" stroke="#000"/>
<line x1="54" x2="60" y1="118.5" y2="118.5" stroke="#000"/>
<line x1="54" x2="60" y1="113.5" y2="113.5" stroke="#000"/>
<line x1="54" x2="60" y1="108.5" y2="108.5" stroke="#000"/>
<line x1="54" x2="60" y1="103.5" y2="103.5" stroke="#000"/>
<line x1="52" x2="60" y1="98.5" y2="98.5" stroke="#000"/>
<line x1="54" x2="60" y1="697.5" y2="697.5" stroke="#000"/>
<line x1="54" x2="60" y1="689.5" y2="689.5" stroke="#000"/>
<line x1="54" x2="60" y1="681.5" y2="681.5" stroke="#000"/>
<line x1="52" x2="60" y1="673.5" y2="673.5" stroke="#000"/>
<line x1="54" x2="60" y1="665.5" y2="665.5" stroke="#000"/>
<line x1="54" x2="60" y1="657.5" y2="657.5" stroke="#000"/>
<line x1="54" x2="60" y1="649.5" y2="649.5" stroke="#000"/>
<line x1="54" x2="60" y1="641.5" y2="641.5" stroke="#000"/>
<line x1="52" x2="60" y1="633.5" y2="633.5" stroke="#000"/>
<line x1="54" x2="60" y1="625.5" y2="625.5" stroke="#000"/>
<line x1="54" x2="60" y1="617.5" y2="617.5" stroke="#000"/>
<line x1="54" x2="60" y1="609.5" y2="609.5" stroke="#000"/>
<line x1="54" x2="60" y1="601.5" y2="601.5" stroke="#000"/>
<line x1="52" x2="60" y1="593.5" y2="593.5" stroke="#000"/>
<line x1="54" x2="60" y1="585.5" y2="585.5" stroke="#000"/>
<line x1="54" x2="60" y1="577.5" y2="577.5" stroke="#000"/>
<line x1="54" x2="60" y1="569.5" y2="569.5" stroke="#000"/>
<line x1="54" x2="60" y1="561.5" y2="561.5" stroke="#000"/>
<line x1="52" x2="60" y1="553.5" y2="553.5" stroke="#000"/>
<line x1="54" x2="60" y1="545.5" y2="545.5" stroke="#000"/>
<line x1="54" x2="60" y1="537.5" y2="537.5" stroke="#000"/>
<line x1="54" x2="60" y1="529.5" y2="529.5" stroke="#000"/>
<line x1="54" x2="60" y1="521.5" y2="521.5" stroke="#000"/>
<line x1="52" x2="60" y1="513.5" y2="513.5" stroke="#000"/>
<line x1="54" x2="60" y1="505.5" y2="505.5" stroke="#000"/>
<line x1="54" x2="60" y1="497.5" y2="497.5" stroke="#000"/>
<line x1="54" x2="60" y1="489.5" y2="489.5" stroke="#000"/>
<line x1="54" x2="60" y1="481.5" y2="481.5" stroke="#000"/>
<line x1="52" x2="60" y1="473.5" y2="473.5" stroke="#000"/>
<line x1="54" x2="60" y1="464.5" y2="464.5" stroke="#000"/>
<line x1="54" x2="60" y1="456.5" y2="456.5" stroke="#000"/>
<line x1="54" x2="60" y1="448.5" y2="448.5" stroke="#000"/>
<line x1="54" x2="60" y1="440.5" y2="440.5" stroke="#000"/>
<line x1="52" x2="60" y1="432.5" y2="432.5" stroke="#000"/>
<line x1="54" x2="60" y1="424.5" y2="424.5" stroke="#000"/>
<line x1="54" x2="60" y1="416.5" y2="416.5" stroke="#000"/>
<line x1="54" x2="60" y1="408.5" y2="408.5" stroke="#000"/>
<line x1="54" x2="60" y1="400.5" y2="400.5" stroke="#000"/>
<line x1="52" x2="60" y1="392.5" y2="392.5" stroke="#000"/>
<line x1="54" x2="60" y1="384.5" y2="384.5" stroke="#000"/>
<line x1="54" x2="60" y1="376.5" y2="376.5" stroke="#000"/>
<line x1="54" x2="60" y1="368.5" y2="368.5" stroke="#000"/>
<line x1="54" x2="60" y1="360.5" y2="360.5" stroke="#000"/>
<line x1="52" x2="60" y1="352.5" y2="352.5" stroke="#000"/>
<line x1="54" x2="60" y1="344.5" y2="344.5" stroke="#000"/>
<line x1="54" x2="60" y1="336.5" y2="336.5" stroke="#000"/>
<line x1="54" x2="60" y1="328.5" y2="328.5" stroke="#000"/>
<line x1="54" x2="60" y1="320.5" y2="320.5" stroke="#000"/>
<line x1="52" x2="60" y1="312.5" y2="312.5" stroke="#000"/>
<line x1="54" x2="60" y1="304.5" y2="304.5" stroke="#000"/>
<line x1="54" x2="60" y1="296.5" y2="296.5" stroke="#000"/>
<line x1="54" x2="60" y1="288.5" y2="288.5" stroke="#000"/>
<line x1="54" x2="60" y1="280.5" y2="280.5" stroke="#000"/>
<line x1="52" x2="60" y1="272.5" y2="272.5" stroke="#000"/>
<line x1="54" x2="60" y1="264.5" y2="264.5" stroke="#000"/>
<line x1="54" x2="60" y1="256.5" y2="256.5" stroke="#000"/>
<line x1="54" x2="60" y1="248.5" y2="248.5" stroke="#000"/>
<line x1="54" x2="60" y1="240.5" y2="240.5" stroke="#000"/>
<line x1="52" x2="60" y1="232.5" y2="232.5" stroke="#000"/>
<line x1="54" x2="60" y1="224.5" y2="224.5" stroke="#000"/>
<line x1="54" x2="60" y1="216.5" y2="216.5" stroke="#000"/>
<line x1="54" x2="60" y1="208.5" y2="208.5" stroke="#000"/>
<line x1="54" x2="60" y1="200.5" y2="200.5" stroke="#000"/>
<line x1="52" x2="60" y1="192.5" y2="192.5" stroke="#000"/>
<line x1="147.5" x2="147.5" y1="157" y2="165" stroke="#000"/>
<line x1="147.5" x2="147.5" y1="698" y2="706" stroke="#000"/>
<line x1="147.5" x2="147.5" y1="971" y2="979" stroke="#000"/>
<line x1="505.5" x2="505.5" y1="157" y2="165" stroke="#000"/>
<line x1="505.5" x2="505.5" y1="698" y2="706" stroke="#000"/>
<line x1="505.5" x2="505.5" y1="971" y2="979" stroke="#000"/>
<line x1="863.5" x2="863.5" y1="157" y2="165" stroke="#000"/>
<line x1="863.5" x2="863.5" y1="698" y2="706" stroke="#000"/>
<line x1="863.5" x2="863.5" y1="971" y2="979" stroke="#000"/>
</svg>
<div class="a" style="left:220.5px;top:263.5px;transform-origin:0 0;transform:rotate(-90deg);font-size:13.6px;line-height:13px;color:#2a5a50;white-space:nowrap">Night Time</div>
<div class="a" style="left:578.5px;top:263.5px;transform-origin:0 0;transform:rotate(-90deg);font-size:13.6px;line-height:13px;color:#2a5a50;white-space:nowrap">Night Time</div>
<div class="a" style="left:936.5px;top:263.5px;transform-origin:0 0;transform:rotate(-90deg);font-size:13.6px;line-height:13px;color:#2a5a50;white-space:nowrap">Night Time</div>
<svg class="a" style="left:971px;top:197px" width="66" height="21"><g fill="#a0a0a0"><rect x="0.5" y="12" width="5.5" height="7.6"/><rect x="8" y="7.6" width="5.6" height="12"/><path d="M15.8,1.6 h6 l9,11 v-11 h5.2 v18 h-6 l-9,-11 v11 h-5.2z"/><path d="M38.8,1.6 h17.5 v5 h-6 v13 h-5.5 v-13 h-6z"/><rect x="58" y="6.5" width="6.5" height="13.1"/></g><circle cx="61" cy="3.6" r="3" fill="#a8c4e0"/></svg>
<div class="a" style="left:1083px;top:178px;width:177px;height:549px;border:1px solid #d5dfe5;border-bottom:none;border-radius:3px 3px 0 0"></div>
<div class="a" style="left:1088px;top:168px;padding:0 3px;background:#fff;font-weight:bold;font-size:11.5px;line-height:14px">Project Result</div>
<div class="rp" style="top:92px;">Position</div>
<div class="rp" style="top:109px;">Time Resolution<b class="mono">00:05:00</b></div>
<div class="rp h" style="top:126px;color:#1a1ae0;">LAeq_dt</div>
<div class="rp" style="top:143px;color:#8aa848;">LZeq_dt</div>
<div class="rp" style="top:185px">Start<b class="mono">05 Feb 18:11:34</b></div>
<div class="rp" style="top:202px">End<b class="mono">08 Feb 11:42:32</b></div>
<div class="rp" style="top:219px">Duration<b class="mono">2 17:30:58</b></div>
<div class="rp h" style="top:236px;color:#5a2a9a">LASmax<b>72.2 dB</b></div>
<div class="rp" style="top:253px;color:#2a9ac0">LASmin<b>23.4 dB</b></div>
<div class="rp h" style="top:270px;color:#a01818">LAFmax<b>79.1 dB</b></div>
<div class="rp" style="top:287px;color:#8aa848">LAFmin<b>23.1 dB</b></div>
<div class="rp h" style="top:304px;color:#d06020">LAImax<b>82.6 dB</b></div>
<div class="rp" style="top:321px;color:#4a6aaa">LAImin<b>23.5 dB</b></div>
<div class="rp h" style="top:338px;color:#1a3a9a">LAeq<b>30.3 dB</b></div>
<div class="rp" style="top:355px;color:#a03030">LAIeq<b>35.0 dB</b></div>
<div class="rp h" style="top:372px;color:#7a9a3a">LAPKmax<b>101.0 dB</b></div>
<div class="rp" style="top:389px;color:#6a4a9a">LAFT3eq<b>34.9 dB</b></div>
<div class="rp h" style="top:406px;color:#3a8aaa">LAFT5eq<b>36.6 dB</b></div>
<div class="rp" style="top:423px;color:#9ab848">LCSmax<b>76.4 dB</b></div>
<div class="rp h" style="top:440px;color:#7a5aaa">LCSmin<b>32.7 dB</b></div>
<div class="rp" style="top:457px;color:#3a6aaa">LCFmax<b>83.9 dB</b></div>
<div class="rp h" style="top:474px;color:#c03030">LCFmin<b>30.2 dB</b></div>
<div class="rp" style="top:491px;color:#2a9ac0">LCImax<b>87.5 dB</b></div>
<div class="rp h" style="top:508px;color:#e08030">LCImin<b>34.4 dB</b></div>
<div class="rp" style="top:525px;color:#c07020">LCeq<b>47.5 dB</b></div>
<div class="rp h" style="top:542px;color:#5a80c0">LCIeq<b>52.0 dB</b></div>
<div class="rp" style="top:559px;color:#c05050">LCPKmax<b>103.4 dB</b></div>
<div class="rp h" style="top:576px;color:#f09060">LZSmax<b>90.5 dB</b></div>
<div class="rp" style="top:593px;color:#a8b0d8">LZSmin<b>37.8 dB</b></div>
<div class="rp h" style="top:610px;color:#7a60a8">LZFmax<b>96.1 dB</b></div>
<div class="rp" style="top:627px;color:#40a8d0">LZFmin<b>34.3 dB</b></div>
<div class="rp h" style="top:644px;color:#d8a0a0">LZImax<b>98.1 dB</b></div>
<div class="rp" style="top:661px;color:#c0d8a0">LZImin<b>40.4 dB</b></div>
<div class="rp h" style="top:678px;color:#8aa848">LZeq<b>52.8 dB</b></div>
<div class="rp" style="top:695px;color:#b0a0d0">LZIeq<b>58.7 dB</b></div>
<div class="rp h" style="top:712px;color:#a0c8e0">LZPKmax<b>103.7 dB</b></div>
<div class="a" style="left:1261px;top:87px;width:17px;height:639px;background:linear-gradient(90deg,#e6e6e6,#efefef 30%,#efefef 80%,#e4e4e4)"></div>
<div class="a" style="left:1265px;top:93px;width:0;height:0;border-left:4px solid transparent;border-right:4px solid transparent;border-bottom:4px solid #777"></div>
<div class="a" style="left:1265px;top:713px;width:0;height:0;border-left:4px solid transparent;border-right:4px solid transparent;border-top:4px solid #777"></div>
<div class="a" style="left:1262px;top:116px;width:15px;height:516px;border:1px solid #959595;border-radius:2px;background:linear-gradient(90deg,#f4f4f4,#e8e8e8 45%,#d2d2d6 55%,#c8c8cc)"><div class="a" style="left:3px;top:252px;width:7px;height:1px;background:#666;box-shadow:0 2px 0 #666,0 4px 0 #666"></div></div>
<div class="a" style="left:1040px;top:726px;width:240px;height:2px;background:#fff"></div>
<div class="a" style="left:0;top:728px;width:1280px;height:3px;background:linear-gradient(#dcdcdc,#c8c8c8)"></div>
<div class="a" style="left:60px;top:751px;width:980px;height:221px;border:1px solid #333;background:#000"></div>
<div class="a" style="left:57px;top:751px;width:3px;height:222px;background:#a8a8a8"></div>
<div class="a" style="left:60px;top:971px;width:980px;height:3px;background:#a8a8a8"></div>
<svg class="a" style="left:61px;top:752px" width="978" height="218" viewBox="61 752 978 218">
<defs>
<linearGradient id="sp" x1="0" y1="0" x2="0" y2="1"><stop offset="0.0000" stop-color="#0070ff"/><stop offset="0.0826" stop-color="#0068ff"/><stop offset="0.1743" stop-color="#0050ff"/><stop offset="0.2477" stop-color="#0040fa"/><stop offset="0.2844" stop-color="#0040fa"/><stop offset="0.3303" stop-color="#0050ff"/><stop offset="0.3670" stop-color="#005cff"/><stop offset="0.4312" stop-color="#0036f6"/><stop offset="0.4771" stop-color="#0032f4"/><stop offset="0.5321" stop-color="#006cff"/><stop offset="0.5596" stop-color="#0068ff"/><stop offset="0.6055" stop-color="#0048ff"/><stop offset="0.6697" stop-color="#0026ff"/><stop offset="0.7339" stop-color="#0012f4"/><stop offset="0.7982" stop-color="#0006d8"/><stop offset="0.8532" stop-color="#000698"/><stop offset="0.9083" stop-color="#000030"/><stop offset="0.9541" stop-color="#000000"/><stop offset="1.0000" stop-color="#000000"/></linearGradient>
<radialGradient id="stg"><stop offset="0" stop-color="#10ff10"/><stop offset="0.35" stop-color="#00f890"/><stop offset="0.65" stop-color="#00c8ff" stop-opacity="0.85"/><stop offset="1" stop-color="#0090ff" stop-opacity="0"/></radialGradient>
<radialGradient id="stc"><stop offset="0" stop-color="#00f0ff"/><stop offset="0.5" stop-color="#00c0ff" stop-opacity="0.8"/><stop offset="1" stop-color="#0080ff" stop-opacity="0"/></radialGradient>
<radialGradient id="stb"><stop offset="0" stop-color="#20b0ff" stop-opacity="0.9"/><stop offset="1" stop-color="#0070ff" stop-opacity="0"/></radialGradient>
<filter id="fb1" x="-50%" y="-10%" width="200%" height="120%"><feGaussianBlur stdDeviation="0.7 3"/></filter>
<filter id="fb0" x="-50%" y="-10%" width="200%" height="120%"><feGaussianBlur stdDeviation="0.8 3"/></filter>
<filter id="fbk" x="-5%" y="-50%" width="110%" height="200%"><feGaussianBlur stdDeviation="0.7 6"/></filter>
<filter id="fbh" x="-10%" y="-50%" width="120%" height="200%"><feGaussianBlur stdDeviation="14 3"/></filter>
</defs>
<rect x="61" y="752" width="978" height="218" fill="url(#sp)"/>
<g filter="url(#fbh)">
<rect x="61" y="862" width="130" height="14" fill="#10b0ff" opacity="0.6"/>
<rect x="61" y="826" width="130" height="12" fill="#1090ff" opacity="0.35"/>
<rect x="320" y="860" width="160" height="18" fill="#00b0ff" opacity="0.6"/>
<rect x="320" y="822" width="160" height="18" fill="#00a0ff" opacity="0.42"/>
<rect x="640" y="860" width="200" height="18" fill="#00b0ff" opacity="0.6"/>
<rect x="640" y="822" width="200" height="18" fill="#00a0ff" opacity="0.42"/>
<rect x="960" y="860" width="79" height="18" fill="#00b0ff" opacity="0.45"/>
<rect x="960" y="822" width="79" height="18" fill="#00a0ff" opacity="0.315"/>
<rect x="500" y="798" width="140" height="125" fill="#0010e8" opacity="0.75"/>
<rect x="845" y="798" width="123" height="125" fill="#0010e8" opacity="0.92"/>
<rect x="240" y="798" width="80" height="125" fill="#0010e8" opacity="0.4"/>
</g>
<g filter="url(#fb0)">
<rect x="67.3" y="805" width="2" height="141" fill="#50b8ff" opacity="0.18"/>
<rect x="72.8" y="807" width="2" height="102" fill="#50b8ff" opacity="0.19"/>
<rect x="79.0" y="823" width="2" height="81" fill="#50b8ff" opacity="0.15"/>
<rect x="82.4" y="825" width="2" height="110" fill="#50b8ff" opacity="0.09"/>
<rect x="90.3" y="837" width="2" height="96" fill="#50b8ff" opacity="0.22"/>
<rect x="94.1" y="761" width="2" height="165" fill="#50b8ff" opacity="0.09"/>
<rect x="98.1" y="779" width="2" height="122" fill="#50b8ff" opacity="0.18"/>
<rect x="103.3" y="827" width="2" height="99" fill="#50b8ff" opacity="0.22"/>
<rect x="108.8" y="813" width="2" height="110" fill="#50b8ff" opacity="0.14"/>
<rect x="116.7" y="840" width="2" height="102" fill="#50b8ff" opacity="0.24"/>
<rect x="121.3" y="778" width="2" height="136" fill="#50b8ff" opacity="0.10"/>
<rect x="128.2" y="792" width="2" height="150" fill="#50b8ff" opacity="0.17"/>
<rect x="135.9" y="828" width="2" height="72" fill="#50b8ff" opacity="0.13"/>
<rect x="143.5" y="798" width="2" height="151" fill="#50b8ff" opacity="0.17"/>
<rect x="146.9" y="810" width="2" height="129" fill="#50b8ff" opacity="0.14"/>
<rect x="150.3" y="787" width="2" height="162" fill="#50b8ff" opacity="0.25"/>
<rect x="153.9" y="780" width="2" height="125" fill="#50b8ff" opacity="0.09"/>
<rect x="160.9" y="774" width="2" height="154" fill="#50b8ff" opacity="0.18"/>
<rect x="164.8" y="819" width="2" height="88" fill="#50b8ff" opacity="0.22"/>
<rect x="168.4" y="794" width="2" height="117" fill="#50b8ff" opacity="0.14"/>
<rect x="176.3" y="824" width="2" height="91" fill="#50b8ff" opacity="0.27"/>
<rect x="180.3" y="792" width="2" height="151" fill="#50b8ff" opacity="0.22"/>
<rect x="183.8" y="839" width="2" height="72" fill="#50b8ff" opacity="0.14"/>
<rect x="190.7" y="786" width="2" height="128" fill="#50b8ff" opacity="0.10"/>
<rect x="194.1" y="807" width="2" height="106" fill="#50b8ff" opacity="0.21"/>
<rect x="199.0" y="796" width="2" height="152" fill="#50b8ff" opacity="0.19"/>
<rect x="204.9" y="829" width="2" height="80" fill="#50b8ff" opacity="0.11"/>
<rect x="212.4" y="825" width="2" height="87" fill="#50b8ff" opacity="0.12"/>
<rect x="219.1" y="835" width="2" height="75" fill="#50b8ff" opacity="0.29"/>
<rect x="226.5" y="808" width="2" height="113" fill="#50b8ff" opacity="0.10"/>
<rect x="229.7" y="837" width="2" height="75" fill="#50b8ff" opacity="0.24"/>
<rect x="234.0" y="826" width="2" height="104" fill="#50b8ff" opacity="0.14"/>
<rect x="237.9" y="818" width="2" height="86" fill="#50b8ff" opacity="0.13"/>
<rect x="243.7" y="828" width="2" height="103" fill="#50b8ff" opacity="0.14"/>
<rect x="251.2" y="776" width="2" height="125" fill="#50b8ff" opacity="0.14"/>
<rect x="256.5" y="765" width="2" height="144" fill="#50b8ff" opacity="0.16"/>
<rect x="262.3" y="771" width="2" height="148" fill="#50b8ff" opacity="0.28"/>
<rect x="270.2" y="813" width="2" height="122" fill="#50b8ff" opacity="0.21"/>
<rect x="273.9" y="763" width="2" height="138" fill="#50b8ff" opacity="0.28"/>
<rect x="280.4" y="837" width="2" height="64" fill="#50b8ff" opacity="0.22"/>
<rect x="285.9" y="818" width="2" height="98" fill="#50b8ff" opacity="0.30"/>
<rect x="289.2" y="804" width="2" height="133" fill="#50b8ff" opacity="0.28"/>
<rect x="295.9" y="816" width="2" height="123" fill="#50b8ff" opacity="0.28"/>
<rect x="300.7" y="815" width="2" height="130" fill="#50b8ff" opacity="0.27"/>
<rect x="305.8" y="823" width="2" height="120" fill="#50b8ff" opacity="0.21"/>
<rect x="311.9" y="791" width="2" height="139" fill="#50b8ff" opacity="0.21"/>
<rect x="315.3" y="811" width="2" height="139" fill="#50b8ff" opacity="0.27"/>
<rect x="321.9" y="791" width="2" height="146" fill="#50b8ff" opacity="0.21"/>
<rect x="327.1" y="827" width="2" height="77" fill="#50b8ff" opacity="0.25"/>
<rect x="330.3" y="808" width="2" height="116" fill="#50b8ff" opacity="0.13"/>
<rect x="336.8" y="800" width="2" height="131" fill="#50b8ff" opacity="0.28"/>
<rect x="341.1" y="761" width="2" height="154" fill="#50b8ff" opacity="0.23"/>
<rect x="345.1" y="774" width="2" height="172" fill="#50b8ff" opacity="0.23"/>
<rect x="350.3" y="831" width="2" height="85" fill="#50b8ff" opacity="0.23"/>
<rect x="354.3" y="794" width="2" height="146" fill="#50b8ff" opacity="0.28"/>
<rect x="361.7" y="791" width="2" height="138" fill="#50b8ff" opacity="0.15"/>
<rect x="365.4" y="800" width="2" height="142" fill="#50b8ff" opacity="0.27"/>
<rect x="371.9" y="836" width="2" height="78" fill="#50b8ff" opacity="0.12"/>
<rect x="377.2" y="782" width="2" height="129" fill="#50b8ff" opacity="0.17"/>
<rect x="383.3" y="800" width="2" height="116" fill="#50b8ff" opacity="0.26"/>
<rect x="391.2" y="796" width="2" height="108" fill="#50b8ff" opacity="0.09"/>
<rect x="398.6" y="763" width="2" height="172" fill="#50b8ff" opacity="0.21"/>
<rect x="403.1" y="823" width="2" height="78" fill="#50b8ff" opacity="0.11"/>
<rect x="408.4" y="762" width="2" height="180" fill="#50b8ff" opacity="0.13"/>
<rect x="412.1" y="764" width="2" height="168" fill="#50b8ff" opacity="0.18"/>
<rect x="418.2" y="812" width="2" height="128" fill="#50b8ff" opacity="0.29"/>
<rect x="424.7" y="776" width="2" height="148" fill="#50b8ff" opacity="0.12"/>
<rect x="427.7" y="798" width="2" height="138" fill="#50b8ff" opacity="0.12"/>
<rect x="432.1" y="788" width="2" height="147" fill="#50b8ff" opacity="0.19"/>
<rect x="438.1" y="820" width="2" height="99" fill="#50b8ff" opacity="0.25"/>
<rect x="445.7" y="767" width="2" height="180" fill="#50b8ff" opacity="0.24"/>
<rect x="449.3" y="796" width="2" height="135" fill="#50b8ff" opacity="0.28"/>
<rect x="454.2" y="806" width="2" height="138" fill="#50b8ff" opacity="0.26"/>
<rect x="461.9" y="797" width="2" height="135" fill="#50b8ff" opacity="0.13"/>
<rect x="468.5" y="825" width="2" height="107" fill="#50b8ff" opacity="0.24"/>
<rect x="472.6" y="832" width="2" height="117" fill="#50b8ff" opacity="0.30"/>
<rect x="478.3" y="823" width="2" height="93" fill="#50b8ff" opacity="0.28"/>
<rect x="485.6" y="788" width="2" height="116" fill="#50b8ff" opacity="0.18"/>
<rect x="491.3" y="821" width="2" height="103" fill="#50b8ff" opacity="0.09"/>
<rect x="498.4" y="765" width="2" height="175" fill="#50b8ff" opacity="0.12"/>
<rect x="503.0" y="823" width="2" height="84" fill="#50b8ff" opacity="0.11"/>
<rect x="508.6" y="818" width="2" height="124" fill="#50b8ff" opacity="0.23"/>
<rect x="516.4" y="799" width="2" height="148" fill="#50b8ff" opacity="0.10"/>
<rect x="520.5" y="802" width="2" height="112" fill="#50b8ff" opacity="0.24"/>
<rect x="526.7" y="802" width="2" height="140" fill="#50b8ff" opacity="0.20"/>
<rect x="531.2" y="790" width="2" height="152" fill="#50b8ff" opacity="0.28"/>
<rect x="535.3" y="828" width="2" height="120" fill="#50b8ff" opacity="0.20"/>
<rect x="541.1" y="776" width="2" height="151" fill="#50b8ff" opacity="0.19"/>
<rect x="547.1" y="762" width="2" height="186" fill="#50b8ff" opacity="0.19"/>
<rect x="552.2" y="824" width="2" height="104" fill="#50b8ff" opacity="0.19"/>
<rect x="558.6" y="765" width="2" height="162" fill="#50b8ff" opacity="0.17"/>
<rect x="566.4" y="834" width="2" height="80" fill="#50b8ff" opacity="0.18"/>
<rect x="570.0" y="795" width="2" height="146" fill="#50b8ff" opacity="0.28"/>
<rect x="575.4" y="785" width="2" height="124" fill="#50b8ff" opacity="0.22"/>
<rect x="583.0" y="770" width="2" height="169" fill="#50b8ff" opacity="0.09"/>
<rect x="587.0" y="778" width="2" height="156" fill="#50b8ff" opacity="0.15"/>
<rect x="591.8" y="810" width="2" height="96" fill="#50b8ff" opacity="0.24"/>
<rect x="595.4" y="801" width="2" height="112" fill="#50b8ff" opacity="0.12"/>
<rect x="601.0" y="795" width="2" height="124" fill="#50b8ff" opacity="0.17"/>
<rect x="606.7" y="773" width="2" height="137" fill="#50b8ff" opacity="0.22"/>
<rect x="612.9" y="802" width="2" height="140" fill="#50b8ff" opacity="0.21"/>
<rect x="620.2" y="779" width="2" height="158" fill="#50b8ff" opacity="0.26"/>
<rect x="627.7" y="785" width="2" height="130" fill="#50b8ff" opacity="0.28"/>
<rect x="631.8" y="840" width="2" height="105" fill="#50b8ff" opacity="0.11"/>
<rect x="636.0" y="818" width="2" height="95" fill="#50b8ff" opacity="0.10"/>
<rect x="643.1" y="794" width="2" height="146" fill="#50b8ff" opacity="0.11"/>
<rect x="648.1" y="815" width="2" height="86" fill="#50b8ff" opacity="0.12"/>
<rect x="654.6" y="833" width="2" height="116" fill="#50b8ff" opacity="0.11"/>
<rect x="660.1" y="821" width="2" height="104" fill="#50b8ff" opacity="0.23"/>
<rect x="664.0" y="766" width="2" height="140" fill="#50b8ff" opacity="0.09"/>
<rect x="669.8" y="801" width="2" height="127" fill="#50b8ff" opacity="0.11"/>
<rect x="673.7" y="776" width="2" height="166" fill="#50b8ff" opacity="0.30"/>
<rect x="681.3" y="768" width="2" height="135" fill="#50b8ff" opacity="0.29"/>
<rect x="686.7" y="821" width="2" height="95" fill="#50b8ff" opacity="0.18"/>
<rect x="692.2" y="794" width="2" height="136" fill="#50b8ff" opacity="0.08"/>
<rect x="698.7" y="828" width="2" height="82" fill="#50b8ff" opacity="0.18"/>
<rect x="705.4" y="792" width="2" height="117" fill="#50b8ff" opacity="0.12"/>
<rect x="711.0" y="761" width="2" height="183" fill="#50b8ff" opacity="0.26"/>
<rect x="717.5" y="829" width="2" height="103" fill="#50b8ff" opacity="0.17"/>
<rect x="723.5" y="800" width="2" height="149" fill="#50b8ff" opacity="0.26"/>
<rect x="727.8" y="833" width="2" height="104" fill="#50b8ff" opacity="0.25"/>
<rect x="734.9" y="792" width="2" height="152" fill="#50b8ff" opacity="0.27"/>
<rect x="741.4" y="821" width="2" height="117" fill="#50b8ff" opacity="0.17"/>
<rect x="748.0" y="766" width="2" height="151" fill="#50b8ff" opacity="0.18"/>
<rect x="751.0" y="788" width="2" height="143" fill="#50b8ff" opacity="0.22"/>
<rect x="755.2" y="836" width="2" height="98" fill="#50b8ff" opacity="0.15"/>
<rect x="761.5" y="806" width="2" height="121" fill="#50b8ff" opacity="0.17"/>
<rect x="769.5" y="811" width="2" height="124" fill="#50b8ff" opacity="0.25"/>
<rect x="777.4" y="762" width="2" height="169" fill="#50b8ff" opacity="0.24"/>
<rect x="781.7" y="792" width="2" height="110" fill="#50b8ff" opacity="0.12"/>
<rect x="786.5" y="768" width="2" height="145" fill="#50b8ff" opacity="0.28"/>
<rect x="792.3" y="801" width="2" height="148" fill="#50b8ff" opacity="0.20"/>
<rect x="800.3" y="811" width="2" height="129" fill="#50b8ff" opacity="0.10"/>
<rect x="806.3" y="821" width="2" height="82" fill="#50b8ff" opacity="0.28"/>
<rect x="810.1" y="798" width="2" height="111" fill="#50b8ff" opacity="0.19"/>
<rect x="816.1" y="765" width="2" height="183" fill="#50b8ff" opacity="0.17"/>
<rect x="821.7" y="808" width="2" height="110" fill="#50b8ff" opacity="0.14"/>
<rect x="828.0" y="805" width="2" height="109" fill="#50b8ff" opacity="0.24"/>
<rect x="832.5" y="761" width="2" height="151" fill="#50b8ff" opacity="0.09"/>
<rect x="836.3" y="820" width="2" height="99" fill="#50b8ff" opacity="0.28"/>
<rect x="843.0" y="764" width="2" height="185" fill="#50b8ff" opacity="0.29"/>
<rect x="846.4" y="832" width="2" height="89" fill="#50b8ff" opacity="0.19"/>
<rect x="854.3" y="779" width="2" height="147" fill="#50b8ff" opacity="0.29"/>
<rect x="860.9" y="797" width="2" height="151" fill="#50b8ff" opacity="0.26"/>
<rect x="866.9" y="769" width="2" height="162" fill="#50b8ff" opacity="0.18"/>
<rect x="870.9" y="764" width="2" height="162" fill="#50b8ff" opacity="0.11"/>
<rect x="876.1" y="813" width="2" height="109" fill="#50b8ff" opacity="0.14"/>
<rect x="882.0" y="794" width="2" height="145" fill="#50b8ff" opacity="0.20"/>
<rect x="890.0" y="836" width="2" height="101" fill="#50b8ff" opacity="0.13"/>
<rect x="893.6" y="831" width="2" height="108" fill="#50b8ff" opacity="0.22"/>
<rect x="898.4" y="782" width="2" height="153" fill="#50b8ff" opacity="0.20"/>
<rect x="904.4" y="811" width="2" height="127" fill="#50b8ff" opacity="0.12"/>
<rect x="908.6" y="838" width="2" height="107" fill="#50b8ff" opacity="0.27"/>
<rect x="911.8" y="765" width="2" height="149" fill="#50b8ff" opacity="0.17"/>
<rect x="917.9" y="768" width="2" height="159" fill="#50b8ff" opacity="0.10"/>
<rect x="921.3" y="814" width="2" height="113" fill="#50b8ff" opacity="0.22"/>
<rect x="926.2" y="798" width="2" height="112" fill="#50b8ff" opacity="0.16"/>
<rect x="932.9" y="827" width="2" height="77" fill="#50b8ff" opacity="0.11"/>
<rect x="940.0" y="810" width="2" height="129" fill="#50b8ff" opacity="0.13"/>
<rect x="945.1" y="781" width="2" height="160" fill="#50b8ff" opacity="0.16"/>
<rect x="951.4" y="839" width="2" height="77" fill="#50b8ff" opacity="0.20"/>
<rect x="958.1" y="834" width="2" height="88" fill="#50b8ff" opacity="0.16"/>
<rect x="961.6" y="830" width="2" height="74" fill="#50b8ff" opacity="0.10"/>
<rect x="967.4" y="799" width="2" height="135" fill="#50b8ff" opacity="0.15"/>
<rect x="974.3" y="766" width="2" height="145" fill="#50b8ff" opacity="0.23"/>
<rect x="977.7" y="784" width="2" height="152" fill="#50b8ff" opacity="0.23"/>
<rect x="982.1" y="771" width="2" height="146" fill="#50b8ff" opacity="0.24"/>
<rect x="986.9" y="769" width="2" height="166" fill="#50b8ff" opacity="0.21"/>
<rect x="994.5" y="835" width="2" height="110" fill="#50b8ff" opacity="0.18"/>
<rect x="1001.5" y="784" width="2" height="131" fill="#50b8ff" opacity="0.17"/>
<rect x="1009.2" y="832" width="2" height="81" fill="#50b8ff" opacity="0.16"/>
<rect x="1014.0" y="789" width="2" height="131" fill="#50b8ff" opacity="0.17"/>
<rect x="1018.0" y="805" width="2" height="135" fill="#50b8ff" opacity="0.20"/>
<rect x="1025.2" y="805" width="2" height="104" fill="#50b8ff" opacity="0.25"/>
<rect x="1032.6" y="783" width="2" height="119" fill="#50b8ff" opacity="0.19"/>
<rect x="1038.3" y="805" width="2" height="143" fill="#50b8ff" opacity="0.22"/>
</g>
<g filter="url(#fb1)">
<ellipse cx="152" cy="825" rx="2.4" ry="46" fill="url(#stc)" opacity="0.85"/>
<rect x="151.2" y="781" width="1.6" height="88" fill="#30c0ff" opacity="0.32"/>
<ellipse cx="95" cy="870" rx="3.0" ry="46" fill="url(#stb)" opacity="0.77"/>
<rect x="94.2" y="826" width="1.6" height="88" fill="#30c0ff" opacity="0.26"/>
<ellipse cx="130" cy="870" rx="3.0" ry="46" fill="url(#stb)" opacity="0.77"/>
<rect x="129.2" y="826" width="1.6" height="88" fill="#30c0ff" opacity="0.26"/>
<ellipse cx="200" cy="870" rx="3.0" ry="57" fill="url(#stb)" opacity="0.77"/>
<rect x="199.2" y="815" width="1.6" height="110" fill="#30c0ff" opacity="0.26"/>
<ellipse cx="232" cy="900" rx="2.4" ry="57" fill="url(#stb)" opacity="0.79"/>
<rect x="231.2" y="845" width="1.6" height="110" fill="#30c0ff" opacity="0.27"/>
<ellipse cx="250" cy="840" rx="2.4" ry="69" fill="url(#stb)" opacity="0.76"/>
<rect x="249.2" y="774" width="1.6" height="132" fill="#30c0ff" opacity="0.25"/>
<ellipse cx="330.7" cy="840" rx="8.0" ry="86" fill="url(#stg)" opacity="1.00"/>
<rect x="329.9" y="758" width="1.6" height="165" fill="#30c0ff" opacity="0.56"/>
<ellipse cx="336" cy="845" rx="5.0" ry="80" fill="url(#stg)" opacity="1.00"/>
<rect x="335.2" y="768" width="1.6" height="154" fill="#30c0ff" opacity="0.44"/>
<ellipse cx="347" cy="850" rx="5.0" ry="69" fill="url(#stg)" opacity="1.00"/>
<rect x="346.2" y="784" width="1.6" height="132" fill="#30c0ff" opacity="0.44"/>
<ellipse cx="351" cy="850" rx="4.0" ry="69" fill="url(#stg)" opacity="1.00"/>
<rect x="350.2" y="784" width="1.6" height="132" fill="#30c0ff" opacity="0.44"/>
<ellipse cx="357" cy="840" rx="4.0" ry="69" fill="url(#stc)" opacity="0.92"/>
<rect x="356.2" y="774" width="1.6" height="132" fill="#30c0ff" opacity="0.38"/>
<ellipse cx="364" cy="830" rx="5.0" ry="103" fill="url(#stg)" opacity="1.00"/>
<rect x="363.2" y="731" width="1.6" height="198" fill="#30c0ff" opacity="0.56"/>
<ellipse cx="369" cy="840" rx="3.0" ry="69" fill="url(#stc)" opacity="0.92"/>
<rect x="368.2" y="774" width="1.6" height="132" fill="#30c0ff" opacity="0.38"/>
<ellipse cx="376" cy="845" rx="4.0" ry="80" fill="url(#stg)" opacity="1.00"/>
<rect x="375.2" y="768" width="1.6" height="154" fill="#30c0ff" opacity="0.44"/>
<ellipse cx="387" cy="840" rx="4.0" ry="80" fill="url(#stg)" opacity="1.00"/>
<rect x="386.2" y="763" width="1.6" height="154" fill="#30c0ff" opacity="0.44"/>
<ellipse cx="400" cy="840" rx="4.0" ry="80" fill="url(#stg)" opacity="1.00"/>
<rect x="399.2" y="763" width="1.6" height="154" fill="#30c0ff" opacity="0.44"/>
<ellipse cx="411" cy="845" rx="4.0" ry="80" fill="url(#stg)" opacity="1.00"/>
<rect x="410.2" y="768" width="1.6" height="154" fill="#30c0ff" opacity="0.44"/>
<ellipse cx="432" cy="835" rx="4.0" ry="80" fill="url(#stg)" opacity="1.00"/>
<rect x="431.2" y="758" width="1.6" height="154" fill="#30c0ff" opacity="0.44"/>
<ellipse cx="447" cy="840" rx="4.0" ry="80" fill="url(#stg)" opacity="1.00"/>
<rect x="446.2" y="763" width="1.6" height="154" fill="#30c0ff" opacity="0.44"/>
<ellipse cx="462" cy="840" rx="4.0" ry="80" fill="url(#stg)" opacity="1.00"/>
<rect x="461.2" y="763" width="1.6" height="154" fill="#30c0ff" opacity="0.44"/>
<ellipse cx="476" cy="835" rx="3.0" ry="69" fill="url(#stc)" opacity="0.92"/>
<rect x="475.2" y="769" width="1.6" height="132" fill="#30c0ff" opacity="0.38"/>
<ellipse cx="493" cy="820" rx="2.4" ry="52" fill="url(#stc)" opacity="0.85"/>
<rect x="492.2" y="770" width="1.6" height="99" fill="#30c0ff" opacity="0.32"/>
<ellipse cx="525" cy="820" rx="2.4" ry="46" fill="url(#stc)" opacity="0.85"/>
<rect x="524.2" y="776" width="1.6" height="88" fill="#30c0ff" opacity="0.32"/>
<ellipse cx="560" cy="850" rx="3.0" ry="57" fill="url(#stb)" opacity="0.82"/>
<rect x="559.2" y="795" width="1.6" height="110" fill="#30c0ff" opacity="0.30"/>
<ellipse cx="600" cy="860" rx="2.4" ry="57" fill="url(#stb)" opacity="0.79"/>
<rect x="599.2" y="805" width="1.6" height="110" fill="#30c0ff" opacity="0.27"/>
<ellipse cx="616" cy="860" rx="2.4" ry="57" fill="url(#stb)" opacity="0.79"/>
<rect x="615.2" y="805" width="1.6" height="110" fill="#30c0ff" opacity="0.27"/>
<ellipse cx="648" cy="870" rx="2.4" ry="52" fill="url(#stc)" opacity="0.85"/>
<rect x="647.2" y="820" width="1.6" height="99" fill="#30c0ff" opacity="0.32"/>
<ellipse cx="657" cy="865" rx="2.4" ry="52" fill="url(#stc)" opacity="0.85"/>
<rect x="656.2" y="816" width="1.6" height="99" fill="#30c0ff" opacity="0.32"/>
<ellipse cx="670" cy="855" rx="3.0" ry="63" fill="url(#stc)" opacity="0.92"/>
<rect x="669.2" y="794" width="1.6" height="121" fill="#30c0ff" opacity="0.38"/>
<ellipse cx="675" cy="865" rx="2.4" ry="52" fill="url(#stc)" opacity="0.88"/>
<rect x="674.2" y="816" width="1.6" height="99" fill="#30c0ff" opacity="0.34"/>
<ellipse cx="680" cy="855" rx="3.0" ry="63" fill="url(#stc)" opacity="0.92"/>
<rect x="679.2" y="794" width="1.6" height="121" fill="#30c0ff" opacity="0.38"/>
<ellipse cx="688" cy="845" rx="7.0" ry="75" fill="url(#stg)" opacity="1.00"/>
<rect x="687.2" y="774" width="1.6" height="143" fill="#30c0ff" opacity="0.56"/>
<ellipse cx="694" cy="850" rx="6.0" ry="80" fill="url(#stg)" opacity="1.00"/>
<rect x="693.2" y="773" width="1.6" height="154" fill="#30c0ff" opacity="0.56"/>
<ellipse cx="705" cy="840" rx="4.0" ry="86" fill="url(#stg)" opacity="1.00"/>
<rect x="704.2" y="758" width="1.6" height="165" fill="#30c0ff" opacity="0.44"/>
<ellipse cx="712" cy="845" rx="4.0" ry="80" fill="url(#stg)" opacity="1.00"/>
<rect x="711.2" y="768" width="1.6" height="154" fill="#30c0ff" opacity="0.44"/>
<ellipse cx="718" cy="840" rx="4.0" ry="92" fill="url(#stg)" opacity="1.00"/>
<rect x="717.2" y="752" width="1.6" height="176" fill="#30c0ff" opacity="0.44"/>
<ellipse cx="727" cy="840" rx="4.0" ry="80" fill="url(#stg)" opacity="1.00"/>
<rect x="726.2" y="763" width="1.6" height="154" fill="#30c0ff" opacity="0.44"/>
<ellipse cx="736" cy="840" rx="4.0" ry="80" fill="url(#stg)" opacity="1.00"/>
<rect x="735.2" y="763" width="1.6" height="154" fill="#30c0ff" opacity="0.44"/>
<ellipse cx="747" cy="845" rx="4.0" ry="86" fill="url(#stg)" opacity="1.00"/>
<rect x="746.2" y="762" width="1.6" height="165" fill="#30c0ff" opacity="0.44"/>
<ellipse cx="758" cy="845" rx="4.0" ry="80" fill="url(#stg)" opacity="1.00"/>
<rect x="757.2" y="768" width="1.6" height="154" fill="#30c0ff" opacity="0.44"/>
<ellipse cx="771" cy="845" rx="4.0" ry="80" fill="url(#stg)" opacity="1.00"/>
<rect x="770.2" y="768" width="1.6" height="154" fill="#30c0ff" opacity="0.44"/>
<ellipse cx="780" cy="845" rx="3.0" ry="69" fill="url(#stc)" opacity="0.92"/>
<rect x="779.2" y="779" width="1.6" height="132" fill="#30c0ff" opacity="0.38"/>
<ellipse cx="785" cy="845" rx="4.0" ry="80" fill="url(#stc)" opacity="0.97"/>
<rect x="784.2" y="768" width="1.6" height="154" fill="#30c0ff" opacity="0.42"/>
<ellipse cx="801" cy="850" rx="4.0" ry="80" fill="url(#stc)" opacity="0.97"/>
<rect x="800.2" y="773" width="1.6" height="154" fill="#30c0ff" opacity="0.42"/>
<ellipse cx="816" cy="850" rx="3.0" ry="80" fill="url(#stc)" opacity="0.92"/>
<rect x="815.2" y="773" width="1.6" height="154" fill="#30c0ff" opacity="0.38"/>
<ellipse cx="830" cy="845" rx="4.0" ry="80" fill="url(#stc)" opacity="0.97"/>
<rect x="829.2" y="768" width="1.6" height="154" fill="#30c0ff" opacity="0.42"/>
<ellipse cx="864" cy="860" rx="2.4" ry="57" fill="url(#stb)" opacity="0.79"/>
<rect x="863.2" y="805" width="1.6" height="110" fill="#30c0ff" opacity="0.27"/>
<ellipse cx="884" cy="860" rx="2.4" ry="57" fill="url(#stb)" opacity="0.79"/>
<rect x="883.2" y="805" width="1.6" height="110" fill="#30c0ff" opacity="0.27"/>
<ellipse cx="916" cy="860" rx="2.4" ry="57" fill="url(#stb)" opacity="0.79"/>
<rect x="915.2" y="805" width="1.6" height="110" fill="#30c0ff" opacity="0.27"/>
<ellipse cx="975" cy="860" rx="3.0" ry="57" fill="url(#stc)" opacity="0.85"/>
<rect x="974.2" y="805" width="1.6" height="110" fill="#30c0ff" opacity="0.32"/>
<ellipse cx="985" cy="860" rx="3.0" ry="69" fill="url(#stc)" opacity="0.88"/>
<rect x="984.2" y="794" width="1.6" height="132" fill="#30c0ff" opacity="0.34"/>
<ellipse cx="998" cy="850" rx="3.0" ry="69" fill="url(#stc)" opacity="0.92"/>
<rect x="997.2" y="784" width="1.6" height="132" fill="#30c0ff" opacity="0.38"/>
<ellipse cx="1008" cy="855" rx="5.0" ry="98" fill="url(#stg)" opacity="1.00"/>
<rect x="1007.2" y="762" width="1.6" height="187" fill="#30c0ff" opacity="0.56"/>
<ellipse cx="1012" cy="860" rx="3.0" ry="69" fill="url(#stc)" opacity="0.92"/>
<rect x="1011.2" y="794" width="1.6" height="132" fill="#30c0ff" opacity="0.38"/>
<ellipse cx="1020" cy="860" rx="3.0" ry="69" fill="url(#stc)" opacity="0.88"/>
<rect x="1019.2" y="794" width="1.6" height="132" fill="#30c0ff" opacity="0.34"/>
<ellipse cx="1030" cy="850" rx="3.0" ry="69" fill="url(#stc)" opacity="0.92"/>
<rect x="1029.2" y="784" width="1.6" height="132" fill="#30c0ff" opacity="0.38"/>
<ellipse cx="1035" cy="830" rx="3.0" ry="69" fill="url(#stc)" opacity="0.92"/>
<rect x="1034.2" y="764" width="1.6" height="132" fill="#30c0ff" opacity="0.38"/>
</g>
<filter id="fbk2" x="-5%" y="-50%" width="110%" height="200%"><feGaussianBlur stdDeviation="2 10"/></filter>
<path d="M61,990 L61.0,928.3 L66.5,949.0 L74.6,929.2 L81.8,944.4 L88.5,927.3 L95.6,947.9 L103.9,928.5 L110.1,945.7 L116.8,930.3 L124.3,945.0 L131.0,932.2 L136.7,942.2 L142.8,927.4 L150.2,942.1 L156.9,928.3 L164.2,935.4 L171.2,924.1 L177.9,935.6 L185.0,925.0 L192.9,940.5 L198.9,917.6 L205.2,927.9 L210.2,909.2 L217.1,920.2 L224.2,913.9 L231.8,918.9 L237.5,914.4 L244.1,922.0 L250.8,912.5 L256.6,938.4 L261.2,923.4 L268.2,939.7 L272.7,925.9 L280.1,946.3 L285.8,927.2 L292.8,947.0 L300.0,930.3 L307.5,948.4 L314.6,932.9 L322.1,946.8 L329.5,937.4 L337.7,950.9 L345.0,931.5 L353.2,947.5 L358.5,940.5 L364.9,951.4 L371.2,938.1 L376.9,949.6 L381.8,932.2 L387.7,950.3 L396.1,929.8 L404.1,948.9 L410.7,930.7 L417.9,949.1 L423.3,938.4 L429.6,945.2 L437.0,933.6 L445.5,943.4 L451.8,935.3 L457.7,946.0 L463.9,933.8 L470.9,943.5 L477.4,930.0 L484.6,940.6 L490.8,923.1 L498.3,941.3 L503.1,930.1 L510.1,944.2 L516.8,927.1 L524.7,938.6 L530.5,927.3 L536.3,933.3 L543.3,921.7 L550.4,932.7 L558.0,915.7 L563.3,933.1 L570.5,920.5 L576.3,924.3 L583.4,917.2 L590.5,917.2 L597.5,914.7 L603.4,918.9 L610.3,915.5 L617.7,920.3 L623.3,913.1 L629.2,926.8 L633.8,922.9 L641.4,935.9 L648.0,916.9 L653.7,937.4 L660.8,926.9 L668.4,939.2 L674.4,931.0 L680.7,943.8 L685.2,933.7 L691.7,943.4 L697.8,924.8 L703.9,942.9 L709.7,935.0 L714.5,944.9 L720.2,933.6 L726.4,947.9 L731.2,934.9 L738.3,945.7 L747.0,924.5 L752.1,939.4 L757.8,929.9 L763.8,942.0 L770.5,926.1 L775.7,939.0 L781.8,934.0 L788.5,940.1 L796.1,922.8 L803.3,939.9 L809.4,930.0 L815.1,936.2 L820.7,924.1 L827.3,936.8 L835.0,921.5 L843.1,928.7 L849.6,917.1 L855.1,923.6 L860.5,917.4 L867.7,923.3 L873.2,913.5 L879.5,922.6 L886.9,912.2 L893.3,919.0 L899.0,912.3 L906.3,917.4 L912.8,909.4 L917.7,917.7 L924.4,910.2 L931.4,918.3 L936.0,909.8 L940.1,916.6 L945.8,912.5 L950.5,917.4 L958.7,914.5 L965.4,934.6 L974.5,927.4 L979.0,945.8 L985.5,929.5 L992.2,949.0 L999.2,929.6 L1004.1,950.8 L1010.5,936.6 L1016.6,945.9 L1022.4,932.8 L1027.5,945.1 L1034.7,938.5 L1040,990 Z" fill="#000010" opacity="0.55" filter="url(#fbk2)"/>
<path d="M61,990 L61.0,934.3 L62.3,953.4 L65.1,942.7 L66.5,955.0 L69.5,942.3 L71.9,948.6 L74.6,935.2 L76.3,949.0 L79.0,936.4 L81.8,950.4 L83.7,930.7 L86.2,951.0 L88.5,933.3 L91.1,954.9 L93.1,931.6 L95.6,953.9 L98.5,931.1 L101.4,954.5 L103.9,934.5 L106.5,952.6 L108.6,935.3 L110.1,951.7 L113.3,935.5 L114.8,946.0 L116.8,936.3 L120.0,944.1 L121.8,938.0 L124.3,951.0 L125.8,938.3 L128.0,948.8 L131.0,938.2 L132.4,944.4 L134.0,935.6 L136.7,948.2 L138.3,935.9 L140.1,943.7 L142.8,933.4 L145.1,948.6 L147.2,932.7 L150.2,948.1 L152.1,928.4 L155.2,943.7 L156.9,934.3 L160.0,946.8 L161.9,928.4 L164.2,941.4 L167.3,926.7 L169.0,938.7 L171.2,930.1 L174.0,945.6 L176.4,932.5 L177.9,941.6 L179.6,923.9 L181.8,944.7 L185.0,931.0 L187.3,939.7 L190.0,934.1 L192.9,946.5 L195.7,932.2 L197.5,942.2 L198.9,923.6 L201.0,940.4 L203.4,913.7 L205.2,933.9 L207.2,910.9 L208.6,934.1 L210.2,915.2 L212.5,927.2 L215.3,917.8 L217.1,926.2 L218.9,915.8 L221.6,928.9 L224.2,919.9 L226.1,929.7 L229.3,911.0 L231.8,924.9 L233.7,912.2 L235.4,930.3 L237.5,920.4 L240.7,932.4 L242.3,912.9 L244.1,928.0 L246.4,916.6 L248.3,928.0 L250.8,918.5 L252.4,936.1 L254.3,917.2 L256.6,944.4 L258.4,926.3 L259.8,942.3 L261.2,929.4 L263.8,944.5 L265.8,929.6 L268.2,945.7 L269.9,939.7 L271.3,950.3 L272.7,931.9 L274.7,953.0 L277.2,935.0 L280.1,952.3 L281.9,939.7 L283.2,952.7 L285.8,933.2 L288.5,955.8 L290.9,945.2 L292.8,953.0 L295.3,944.5 L297.3,955.1 L300.0,936.3 L302.5,952.0 L305.2,935.8 L307.5,954.4 L309.7,945.4 L312.3,961.2 L314.6,938.9 L317.4,953.7 L320.5,940.5 L322.1,952.8 L323.8,941.0 L326.4,955.1 L329.5,943.4 L331.6,952.9 L334.7,946.0 L337.7,956.9 L340.1,940.7 L341.8,960.5 L345.0,937.5 L347.4,952.4 L350.2,943.7 L353.2,953.5 L355.6,937.0 L357.1,956.4 L358.5,946.5 L360.0,960.7 L363.1,938.9 L364.9,957.4 L367.6,942.1 L370.0,958.6 L371.2,944.1 L373.4,951.9 L375.3,939.6 L376.9,955.6 L378.6,939.5 L380.5,956.7 L381.8,938.2 L383.2,959.8 L385.6,940.5 L387.7,956.3 L390.2,936.9 L393.0,954.8 L396.1,935.8 L399.1,953.8 L401.1,938.9 L404.1,954.9 L406.4,940.3 L409.4,952.7 L410.7,936.7 L413.7,956.6 L416.1,936.2 L417.9,955.1 L419.2,943.7 L421.3,954.1 L423.3,944.4 L425.9,954.2 L427.6,941.3 L429.6,951.2 L430.9,933.9 L434.1,955.4 L437.0,939.6 L439.8,950.8 L442.5,937.7 L445.5,949.4 L448.3,942.8 L450.6,957.8 L451.8,941.3 L453.6,951.4 L454.9,933.4 L457.7,952.0 L459.6,937.0 L460.9,948.2 L463.9,939.8 L466.1,956.5 L469.3,937.1 L470.9,949.5 L473.9,931.4 L475.5,954.3 L477.4,936.0 L479.0,954.3 L482.2,938.6 L484.6,946.6 L487.6,939.7 L489.0,951.4 L490.8,929.1 L493.8,950.6 L495.2,931.0 L498.3,947.3 L499.7,936.0 L501.5,949.6 L503.1,936.1 L504.7,948.7 L507.5,933.2 L510.1,950.2 L512.4,934.3 L514.2,950.0 L516.8,933.1 L519.2,941.0 L522.4,930.3 L524.7,944.6 L526.0,927.8 L527.7,941.3 L530.5,933.3 L532.3,945.6 L534.0,930.4 L536.3,939.3 L539.3,921.1 L540.6,941.3 L543.3,927.7 L546.3,940.8 L547.9,924.9 L550.4,938.7 L552.9,921.3 L555.1,939.4 L558.0,921.7 L560.2,943.1 L561.8,920.0 L563.3,939.1 L565.0,923.5 L567.7,933.7 L570.5,926.5 L572.7,929.8 L575.1,923.5 L576.3,930.3 L579.0,921.8 L581.9,926.4 L583.4,923.2 L585.6,926.3 L587.7,920.4 L590.5,923.2 L593.5,918.2 L595.8,926.7 L597.5,920.7 L599.3,923.6 L601.1,918.4 L603.4,924.9 L605.7,921.6 L608.6,924.8 L610.3,921.5 L612.9,928.1 L615.6,922.4 L617.7,926.3 L619.3,917.7 L620.6,927.3 L623.3,919.1 L624.8,929.0 L627.5,926.1 L629.2,932.8 L630.7,925.6 L632.4,932.2 L633.8,928.9 L637.0,942.1 L639.7,928.9 L641.4,941.9 L643.1,927.6 L646.1,941.9 L648.0,922.9 L650.4,939.6 L652.4,927.9 L653.7,943.4 L656.3,926.2 L658.7,950.0 L660.8,932.9 L663.7,946.1 L666.5,936.3 L668.4,945.2 L670.7,937.9 L672.3,946.4 L674.4,937.0 L676.5,955.1 L679.1,931.4 L680.7,949.8 L682.0,933.7 L683.9,948.7 L685.2,939.7 L686.9,949.8 L690.0,933.3 L691.7,949.4 L693.2,930.5 L695.1,953.4 L697.8,930.8 L699.0,948.9 L701.0,940.7 L703.9,948.9 L706.7,935.3 L708.0,949.5 L709.7,941.0 L711.2,951.4 L712.4,937.7 L714.5,950.9 L716.0,932.9 L717.7,952.6 L720.2,939.6 L721.8,948.1 L724.4,936.4 L726.4,953.9 L728.1,937.7 L730.0,947.3 L731.2,940.9 L733.7,950.8 L736.5,929.4 L738.3,951.7 L741.4,938.4 L743.9,951.6 L747.0,930.5 L748.7,951.2 L750.1,935.7 L752.1,945.4 L754.0,936.8 L756.2,947.5 L757.8,935.9 L759.9,946.3 L762.4,937.7 L763.8,948.0 L765.9,938.8 L768.2,951.5 L770.5,932.1 L771.8,948.4 L773.7,939.7 L775.7,945.0 L777.9,933.3 L780.0,947.6 L781.8,940.0 L783.7,953.2 L786.0,937.1 L788.5,946.1 L790.7,932.8 L793.8,947.7 L796.1,928.8 L798.9,950.3 L801.3,934.7 L803.3,945.9 L806.2,927.9 L808.2,951.1 L809.4,936.0 L811.6,944.2 L813.6,924.9 L815.1,942.2 L816.7,927.7 L818.4,939.4 L820.7,930.1 L822.4,943.3 L824.9,927.2 L827.3,942.8 L830.2,920.8 L832.0,939.5 L835.0,927.5 L837.6,941.5 L840.2,918.4 L843.1,934.7 L845.5,925.7 L847.8,931.1 L849.6,923.1 L851.9,929.3 L853.6,924.2 L855.1,929.6 L856.6,924.7 L857.9,926.9 L860.5,923.4 L862.6,929.1 L864.8,922.9 L867.7,929.3 L869.0,922.2 L871.2,928.8 L873.2,919.5 L874.9,928.3 L876.8,921.4 L879.5,928.6 L882.4,919.8 L884.4,927.8 L886.9,918.2 L889.7,924.9 L891.6,918.8 L893.3,925.0 L894.5,919.1 L897.6,928.3 L899.0,918.3 L901.1,926.5 L903.1,916.7 L906.3,923.4 L908.9,920.5 L910.2,924.1 L912.8,915.4 L914.3,923.9 L915.5,917.5 L917.7,923.7 L919.5,915.7 L922.4,922.8 L924.4,916.2 L927.1,925.5 L929.1,915.3 L931.4,924.3 L932.9,917.8 L934.3,924.6 L936.0,915.8 L937.4,921.5 L938.7,915.1 L940.1,922.6 L941.9,917.0 L944.1,922.0 L945.8,918.5 L947.1,924.8 L948.9,918.8 L950.5,923.4 L953.7,918.7 L956.6,926.1 L958.7,920.5 L960.6,929.6 L962.9,927.0 L965.4,940.6 L968.5,927.6 L971.7,949.2 L974.5,933.4 L976.1,947.1 L977.6,942.1 L979.0,951.8 L981.7,941.7 L983.9,950.6 L985.5,935.5 L986.7,956.3 L989.6,937.5 L992.2,955.0 L995.0,937.1 L997.8,960.9 L999.2,935.6 L1001.2,958.1 L1002.9,936.1 L1004.1,956.8 L1005.8,942.3 L1007.7,957.6 L1010.5,942.6 L1013.0,954.5 L1014.8,936.1 L1016.6,951.9 L1018.5,938.1 L1020.1,958.4 L1022.4,938.8 L1024.0,952.1 L1025.4,942.8 L1027.5,951.1 L1029.7,942.2 L1031.6,956.4 L1034.7,944.5 L1037.6,954.2 L1040,990 Z" fill="#000" filter="url(#fbk)"/>
<path d="M61,971 L61.0,946.3 L65.1,954.7 L69.5,954.3 L74.6,947.2 L79.0,948.4 L83.7,942.7 L88.5,945.3 L93.1,943.6 L98.5,943.1 L103.9,946.5 L108.6,947.3 L113.3,947.5 L116.8,948.3 L121.8,950.0 L125.8,950.3 L131.0,950.2 L134.0,947.6 L138.3,947.9 L142.8,945.4 L147.2,944.7 L152.1,940.4 L156.9,946.3 L161.9,940.4 L167.3,938.7 L171.2,942.1 L176.4,944.5 L179.6,935.9 L185.0,943.0 L190.0,946.1 L195.7,944.2 L198.9,935.6 L203.4,925.7 L207.2,922.9 L210.2,927.2 L215.3,929.8 L218.9,927.8 L224.2,931.9 L229.3,923.0 L233.7,924.2 L237.5,932.4 L242.3,924.9 L246.4,928.6 L250.8,930.5 L254.3,929.2 L258.4,938.3 L261.2,941.4 L265.8,941.6 L269.9,951.7 L272.7,943.9 L277.2,947.0 L281.9,951.7 L285.8,945.2 L290.9,957.2 L295.3,956.5 L300.0,948.3 L305.2,947.8 L309.7,957.4 L314.6,950.9 L320.5,952.5 L323.8,953.0 L329.5,955.4 L334.7,958.0 L340.1,952.7 L345.0,949.5 L350.2,955.7 L355.6,949.0 L358.5,958.5 L363.1,950.9 L367.6,954.1 L371.2,956.1 L375.3,951.6 L378.6,951.5 L381.8,950.2 L385.6,952.5 L390.2,948.9 L396.1,947.8 L401.1,950.9 L406.4,952.3 L410.7,948.7 L416.1,948.2 L419.2,955.7 L423.3,956.4 L427.6,953.3 L430.9,945.9 L437.0,951.6 L442.5,949.7 L448.3,954.8 L451.8,953.3 L454.9,945.4 L459.6,949.0 L463.9,951.8 L469.3,949.1 L473.9,943.4 L477.4,948.0 L482.2,950.6 L487.6,951.7 L490.8,941.1 L495.2,943.0 L499.7,948.0 L503.1,948.1 L507.5,945.2 L512.4,946.3 L516.8,945.1 L522.4,942.3 L526.0,939.8 L530.5,945.3 L534.0,942.4 L539.3,933.1 L543.3,939.7 L547.9,936.9 L552.9,933.3 L558.0,933.7 L561.8,932.0 L565.0,935.5 L570.5,938.5 L575.1,935.5 L579.0,933.8 L583.4,935.2 L587.7,932.4 L593.5,930.2 L597.5,932.7 L601.1,930.4 L605.7,933.6 L610.3,933.5 L615.6,934.4 L619.3,929.7 L623.3,931.1 L627.5,938.1 L630.7,937.6 L633.8,940.9 L639.7,940.9 L643.1,939.6 L648.0,934.9 L652.4,939.9 L656.3,938.2 L660.8,944.9 L666.5,948.3 L670.7,949.9 L674.4,949.0 L679.1,943.4 L682.0,945.7 L685.2,951.7 L690.0,945.3 L693.2,942.5 L697.8,942.8 L701.0,952.7 L706.7,947.3 L709.7,953.0 L712.4,949.7 L716.0,944.9 L720.2,951.6 L724.4,948.4 L728.1,949.7 L731.2,952.9 L736.5,941.4 L741.4,950.4 L747.0,942.5 L750.1,947.7 L754.0,948.8 L757.8,947.9 L762.4,949.7 L765.9,950.8 L770.5,944.1 L773.7,951.7 L777.9,945.3 L781.8,952.0 L786.0,949.1 L790.7,944.8 L796.1,940.8 L801.3,946.7 L806.2,939.9 L809.4,948.0 L813.6,936.9 L816.7,939.7 L820.7,942.1 L824.9,939.2 L830.2,932.8 L835.0,939.5 L840.2,930.4 L845.5,937.7 L849.6,935.1 L853.6,936.2 L856.6,936.7 L860.5,935.4 L864.8,934.9 L869.0,934.2 L873.2,931.5 L876.8,933.4 L882.4,931.8 L886.9,930.2 L891.6,930.8 L894.5,931.1 L899.0,930.3 L903.1,928.7 L908.9,932.5 L912.8,927.4 L915.5,929.5 L919.5,927.7 L924.4,928.2 L929.1,927.3 L932.9,929.8 L936.0,927.8 L938.7,927.1 L941.9,929.0 L945.8,930.5 L948.9,930.8 L953.7,930.7 L958.7,932.5 L962.9,939.0 L968.5,939.6 L974.5,945.4 L977.6,954.1 L981.7,953.7 L985.5,947.5 L989.6,949.5 L995.0,949.1 L999.2,947.6 L1002.9,948.1 L1005.8,954.3 L1010.5,954.6 L1014.8,948.1 L1018.5,950.1 L1022.4,950.8 L1025.4,954.8 L1029.7,954.2 L1034.7,956.5 L1040,971 Z" fill="#000" filter="url(#fb0)"/>
<rect x="61" y="955" width="978" height="16" fill="#000"/>
<rect x="61" y="752" width="1" height="190" fill="#e8ffff"/><rect x="62" y="752" width="1" height="185" fill="#40d0ff" opacity="0.8"/>
</svg>
<div class="a" style="left:500px;top:734px;width:80px;text-align:center;font-size:12px;line-height:14px">LAeq</div>
<div class="yl" style="left:7px;top:753.5px">16k</div>
<div class="yl" style="left:7px;top:791.0px">4k</div>
<div class="yl" style="left:7px;top:826.9px">1k</div>
<div class="yl" style="left:7px;top:863.5px">250</div>
<div class="yl" style="left:7px;top:899.1px">63</div>
<div class="yl" style="left:7px;top:936.3px">16</div>
<svg class="a" style="left:0;top:0" width="1280" height="1024">
<line x1="52" x2="60" y1="760.5" y2="760.5" stroke="#000"/>
<line x1="52" x2="60" y1="798.5" y2="798.5" stroke="#000"/>
<line x1="52" x2="60" y1="833.5" y2="833.5" stroke="#000"/>
<line x1="52" x2="60" y1="870.5" y2="870.5" stroke="#000"/>
<line x1="52" x2="60" y1="906.5" y2="906.5" stroke="#000"/>
<line x1="52" x2="60" y1="943.5" y2="943.5" stroke="#000"/>
</svg>
<div class="a" style="left:1100px;top:735px;width:160px;text-align:center;font-size:13px;line-height:14px">Project Result RTA</div>
<div class="a" style="left:1120px;top:751px;width:150px;height:221px;border:1px solid #333;background:#fff"></div>
<div class="a" style="left:1117px;top:751px;width:3px;height:222px;background:#a8a8a8"></div>
<div class="a" style="left:1120px;top:971px;width:150px;height:3px;background:#a8a8a8"></div>
<div class="yl" style="left:1066px;top:964.1px">0.0</div>
<div class="yl" style="left:1066px;top:920.3px">15.8</div>
<div class="yl" style="left:1066px;top:876.4px">31.6</div>
<div class="yl" style="left:1066px;top:832.6px">47.4</div>
<div class="yl" style="left:1066px;top:788.7px">63.2</div>
<div class="yl" style="left:1066px;top:744.9px">79.0</div>
<svg class="a" style="left:0;top:0" width="1280" height="1024">
<line x1="1121" x2="1269" y1="927.5" y2="927.5" stroke="#c8c8c8" stroke-dasharray="2 6"/>
<line x1="1121" x2="1269" y1="883.5" y2="883.5" stroke="#c8c8c8" stroke-dasharray="2 6"/>
<line x1="1121" x2="1269" y1="839.5" y2="839.5" stroke="#c8c8c8" stroke-dasharray="2 6"/>
<line x1="1121" x2="1269" y1="795.5" y2="795.5" stroke="#c8c8c8" stroke-dasharray="2 6"/>
<line x1="1112" x2="1120" y1="971.5" y2="971.5" stroke="#000"/>
<line x1="1114" x2="1120" y1="962.5" y2="962.5" stroke="#000"/>
<line x1="1114" x2="1120" y1="953.5" y2="953.5" stroke="#000"/>
<line x1="1114" x2="1120" y1="944.5" y2="944.5" stroke="#000"/>
<line x1="1114" x2="1120" y1="936.5" y2="936.5" stroke="#000"/>
<line x1="1112" x2="1120" y1="927.5" y2="927.5" stroke="#000"/>
<line x1="1114" x2="1120" y1="918.5" y2="918.5" stroke="#000"/>
<line x1="1114" x2="1120" y1="909.5" y2="909.5" stroke="#000"/>
<line x1="1114" x2="1120" y1="900.5" y2="900.5" stroke="#000"/>
<line x1="1114" x2="1120" y1="892.5" y2="892.5" stroke="#000"/>
<line x1="1112" x2="1120" y1="883.5" y2="883.5" stroke="#000"/>
<line x1="1114" x2="1120" y1="874.5" y2="874.5" stroke="#000"/>
<line x1="1114" x2="1120" y1="865.5" y2="865.5" stroke="#000"/>
<line x1="1114" x2="1120" y1="857.5" y2="857.5" stroke="#000"/>
<line x1="1114" x2="1120" y1="848.5" y2="848.5" stroke="#000"/>
<line x1="1112" x2="1120" y1="839.5" y2="839.5" stroke="#000"/>
<line x1="1114" x2="1120" y1="830.5" y2="830.5" stroke="#000"/>
<line x1="1114" x2="1120" y1="822.5" y2="822.5" stroke="#000"/>
<line x1="1114" x2="1120" y1="813.5" y2="813.5" stroke="#000"/>
<line x1="1114" x2="1120" y1="804.5" y2="804.5" stroke="#000"/>
<line x1="1112" x2="1120" y1="795.5" y2="795.5" stroke="#000"/>
<line x1="1114" x2="1120" y1="786.5" y2="786.5" stroke="#000"/>
<line x1="1114" x2="1120" y1="778.5" y2="778.5" stroke="#000"/>
<line x1="1114" x2="1120" y1="769.5" y2="769.5" stroke="#000"/>
<line x1="1114" x2="1120" y1="760.5" y2="760.5" stroke="#000"/>
<line x1="1112" x2="1120" y1="751.5" y2="751.5" stroke="#000"/>
<line x1="1140.5" x2="1140.5" y1="756" y2="970" stroke="#c8c8c8" stroke-dasharray="2 6"/>
<line x1="1140.5" x2="1140.5" y1="971" y2="979" stroke="#000"/>
<line x1="1164.5" x2="1164.5" y1="756" y2="970" stroke="#c8c8c8" stroke-dasharray="2 6"/>
<line x1="1164.5" x2="1164.5" y1="971" y2="979" stroke="#000"/>
<line x1="1188.5" x2="1188.5" y1="756" y2="970" stroke="#c8c8c8" stroke-dasharray="2 6"/>
<line x1="1188.5" x2="1188.5" y1="971" y2="979" stroke="#000"/>
<line x1="1212.5" x2="1212.5" y1="756" y2="970" stroke="#c8c8c8" stroke-dasharray="2 6"/>
<line x1="1212.5" x2="1212.5" y1="971" y2="979" stroke="#000"/>
<line x1="1236.5" x2="1236.5" y1="756" y2="970" stroke="#c8c8c8" stroke-dasharray="2 6"/>
<line x1="1236.5" x2="1236.5" y1="971" y2="979" stroke="#000"/>
<line x1="1260.5" x2="1260.5" y1="756" y2="970" stroke="#c8c8c8" stroke-dasharray="2 6"/>
<line x1="1260.5" x2="1260.5" y1="971" y2="979" stroke="#000"/>
<rect x="1147" y="953" width="11" height="17" fill="#36618f"/>
<rect x="1159" y="935" width="11" height="35" fill="#36618f"/>
<rect x="1171" y="926" width="11" height="44" fill="#36618f"/>
<rect x="1183" y="909" width="11" height="61" fill="#36618f"/>
<rect x="1195" y="906" width="11" height="64" fill="#36618f"/>
<rect x="1207" y="904" width="11" height="66" fill="#36618f"/>
<rect x="1219" y="912" width="11" height="58" fill="#36618f"/>
<rect x="1231" y="917" width="11" height="53" fill="#36618f"/>
<rect x="1243" y="919" width="11" height="51" fill="#36618f"/>
<rect x="1255" y="925" width="11" height="45" fill="#36618f"/>
</svg>
<div class="xl" style="left:1110.5px;top:983px">16</div>
<div class="xl" style="left:1182.5px;top:983px">1k</div>
<div class="a" style="left:0;top:1001px;width:1280px;height:23px;background:#efecec"></div>
<div class="a" style="left:104px;top:1003px;width:1px;height:19px;background:#dcd8d8"></div>
<div class="a" style="left:859px;top:1003px;width:1px;height:19px;background:#dcd8d8"></div>
<div class="a" style="left:864px;top:1003px;width:1px;height:19px;background:#dcd8d8"></div>
<div class="a" style="left:1142px;top:1003px;width:1px;height:19px;background:#dcd8d8"></div>
<div class="a" style="left:3px;top:1005px;font-size:11.15px;line-height:14px">XL2 A2A-09585-E0</div>
<div class="a" style="left:871px;top:1005px;font-size:11.15px;line-height:14px">Start: 2016-02-05 18:10:00 End: 2016-02-08 11:45:00</div>
<div class="a" style="left:1148px;top:1005px;font-size:11.15px;line-height:14px">Samples: 787/235'858</div>
</body></html>
